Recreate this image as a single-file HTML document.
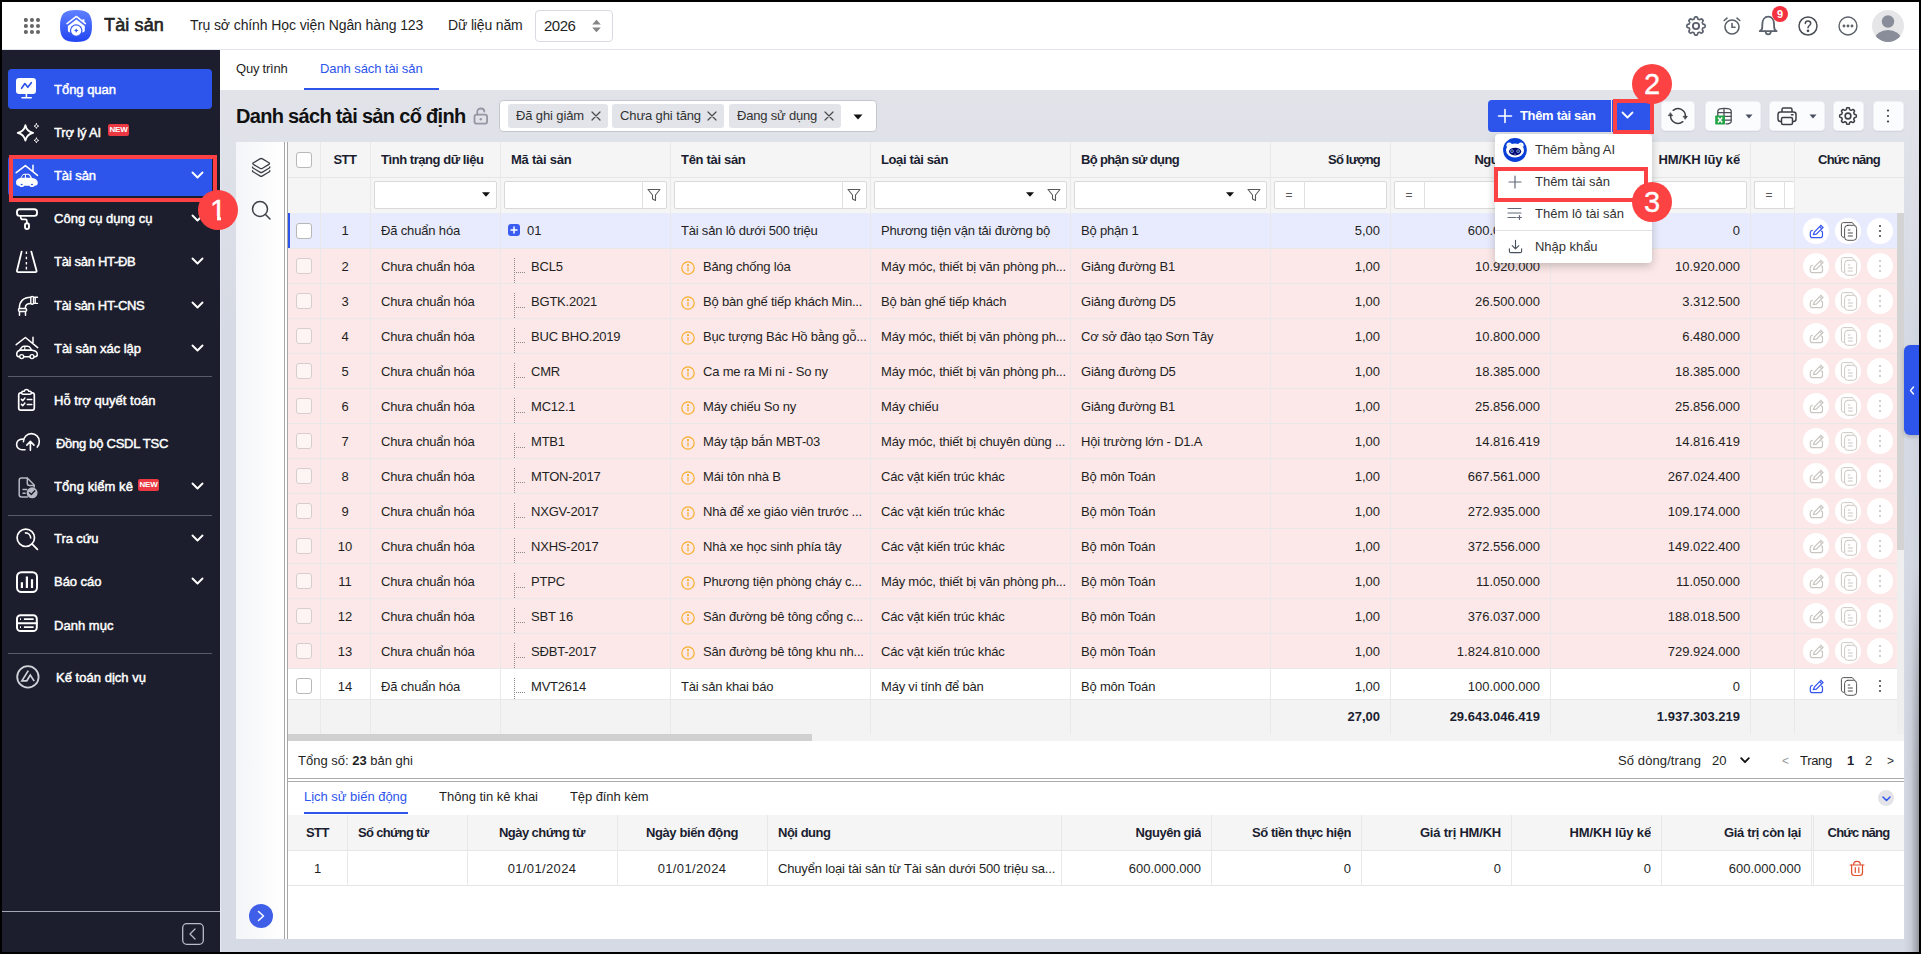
<!DOCTYPE html><html lang="vi"><head><meta charset="utf-8"><title>Tài sản</title><style>
*{box-sizing:border-box;margin:0;padding:0}
html,body{width:1921px;height:954px;overflow:hidden;background:#000}
body{font-family:"Liberation Sans",sans-serif;font-size:13px;color:#1f1f1f;position:relative;letter-spacing:-0.2px}
div,svg{position:absolute}
span{white-space:nowrap}
.c{display:flex;align-items:center;white-space:nowrap;overflow:hidden}
.r{justify-content:flex-end}
.m{justify-content:center}
.b{font-weight:700;letter-spacing:-0.45px;color:#1b1e30}
.n{letter-spacing:0}
.w{color:#fff}
.vl{width:1px;background:#e8e8e8}
.hl{height:1px;background:#e6e6e6}
.inp{background:#fff;border:1px solid #d9d9d9;border-radius:2px}
.btn{background:#fbfcfd;border:1px solid #eef0f5;border-radius:4px}
.circ{border-radius:50%;background:#fff}
.mi{font-weight:400;letter-spacing:0;color:#fff;font-size:13px;-webkit-text-stroke:.45px #fff}
.red{border:4px solid #fb4143}
.num{padding-top:1px;border-radius:50%;background:#fc4242;color:#fff;font-size:29px;-webkit-text-stroke:.35px #fff;display:flex;align-items:center;justify-content:center;letter-spacing:0}
</style></head><body>
<div style="left:2px;top:2px;width:1917px;height:950px;background:#e1e3ea"></div>
<div style="left:2px;top:2px;width:1917px;height:48px;background:#fff;border-bottom:1px solid #e3e5ec"></div>
<svg style="left:24px;top:18px" width="17" height="17" viewBox="0 0 17 17"><circle cx="1.90" cy="2.00" r="2.05" fill="#676767"/><circle cx="1.90" cy="8.00" r="2.05" fill="#676767"/><circle cx="1.90" cy="14.00" r="2.05" fill="#676767"/><circle cx="7.95" cy="2.00" r="2.05" fill="#676767"/><circle cx="7.95" cy="8.00" r="2.05" fill="#676767"/><circle cx="7.95" cy="14.00" r="2.05" fill="#676767"/><circle cx="14.00" cy="2.00" r="2.05" fill="#676767"/><circle cx="14.00" cy="8.00" r="2.05" fill="#676767"/><circle cx="14.00" cy="14.00" r="2.05" fill="#676767"/></svg>
<svg style="left:60px;top:10px" width="32" height="32" viewBox="0 0 32 32">
<defs><linearGradient id="lg" x1="0" y1="0" x2="0" y2="1"><stop offset="0" stop-color="#5f80ff"/><stop offset="1" stop-color="#2145f2"/></linearGradient></defs>
<path d="M16 0C27.500 0 32 3.500 32 16C32 28.500 27.500 32 16 32C4.500 32 0 28.500 0 16C0 3.500 4.500 0 16 0Z" fill="url(#lg)"/>
<path d="M7 13.600L16.400 6.400L25.400 13.600" fill="none" stroke="#fff" stroke-width="1.500" stroke-linecap="round" stroke-linejoin="round"/>
<path d="M22.500 9.200h1.900v3.200l-1.900-1.500z" fill="#fff"/>
<path d="M16.400 9.400L24.800 16V20.500C24.800 21.500 23.500 22.500 22 22.500H10.500C9 22.500 7.900 21.500 7.900 20.500V16Z" fill="#fff"/>
<circle cx="16.200" cy="20.600" r="6.300" fill="#3457f5"/>
<circle cx="16.200" cy="20.600" r="5.100" fill="#fff"/>
<path d="M16.200 18.400l.75 1.450 1.450.75-1.450.75-.75 1.450-.75-1.450-1.450-.75 1.450-.75z" fill="#3457f5"/>
</svg>
<div class="c" style="left:104px;top:9px;width:80px;height:32px;font-size:18px;font-weight:400;letter-spacing:0;color:#222;-webkit-text-stroke:.6px #222"><span id="t1" style="letter-spacing:0.14px">Tài sản</span></div>
<div class="c" style="left:190px;top:9px;width:250px;height:32px;font-size:14px"><span id="t2" style="letter-spacing:-0.1px">Trụ sở chính Học viện Ngân hàng 123</span></div>
<div class="c" style="left:448px;top:9px;width:90px;height:32px;font-size:14px"><span id="t3" style="letter-spacing:-0.16px">Dữ liệu năm</span></div>
<div style="left:535px;top:10px;width:78px;height:32px;background:#fff;border:1px solid #d9dbe2;border-radius:4px"></div>
<div class="c" style="left:544px;top:9px;width:40px;height:33px;font-size:15px;letter-spacing:0"><span id="t4" style="letter-spacing:-0.47px">2026</span></div>
<svg style="left:591px;top:19px" width="11" height="14" viewBox="0 0 11 14"><path d="M1.2 5.5L5.5 0.8L9.8 5.5Z M1.2 8.5L5.5 13.2L9.8 8.5Z" fill="#858585"/></svg>
<svg style="left:1684px;top:14px" width="24" height="24" viewBox="0 0 24 24" fill="none" stroke="#5b626e" stroke-width="1.700" stroke-linejoin="round"><path d="M12.00 2.90L12.36 2.91L12.71 2.96L13.06 3.08L13.36 3.40L13.58 4.06L13.75 4.71L13.96 5.05L14.20 5.22L14.46 5.33L14.72 5.44L14.97 5.55L15.24 5.65L15.53 5.70L15.92 5.61L16.50 5.27L17.12 4.96L17.56 4.95L17.89 5.10L18.17 5.32L18.43 5.57L18.68 5.83L18.90 6.11L19.05 6.44L19.04 6.88L18.73 7.50L18.39 8.08L18.30 8.47L18.35 8.76L18.45 9.03L18.56 9.28L18.67 9.54L18.78 9.80L18.95 10.04L19.29 10.25L19.94 10.42L20.60 10.64L20.92 10.94L21.04 11.29L21.09 11.64L21.10 12.00L21.09 12.36L21.04 12.71L20.92 13.06L20.60 13.36L19.94 13.58L19.29 13.75L18.95 13.96L18.78 14.20L18.67 14.46L18.56 14.72L18.45 14.97L18.35 15.24L18.30 15.53L18.39 15.92L18.73 16.50L19.04 17.12L19.05 17.56L18.90 17.89L18.68 18.17L18.43 18.43L18.17 18.68L17.89 18.90L17.56 19.05L17.12 19.04L16.50 18.73L15.92 18.39L15.53 18.30L15.24 18.35L14.97 18.45L14.72 18.56L14.46 18.67L14.20 18.78L13.96 18.95L13.75 19.29L13.58 19.94L13.36 20.60L13.06 20.92L12.71 21.04L12.36 21.09L12.00 21.10L11.64 21.09L11.29 21.04L10.94 20.92L10.64 20.60L10.42 19.94L10.25 19.29L10.04 18.95L9.80 18.78L9.54 18.67L9.28 18.56L9.03 18.45L8.76 18.35L8.47 18.30L8.08 18.39L7.50 18.73L6.88 19.04L6.44 19.05L6.11 18.90L5.83 18.68L5.57 18.43L5.32 18.17L5.10 17.89L4.95 17.56L4.96 17.12L5.27 16.50L5.61 15.92L5.70 15.53L5.65 15.24L5.55 14.97L5.44 14.72L5.33 14.46L5.22 14.20L5.05 13.96L4.71 13.75L4.06 13.58L3.40 13.36L3.08 13.06L2.96 12.71L2.91 12.36L2.90 12.00L2.91 11.64L2.96 11.29L3.08 10.94L3.40 10.64L4.06 10.42L4.71 10.25L5.05 10.04L5.22 9.80L5.33 9.54L5.44 9.28L5.55 9.03L5.65 8.76L5.70 8.47L5.61 8.08L5.27 7.50L4.96 6.88L4.95 6.44L5.10 6.11L5.32 5.83L5.57 5.57L5.83 5.32L6.11 5.10L6.44 4.95L6.88 4.96L7.50 5.27L8.08 5.61L8.47 5.70L8.76 5.65L9.03 5.55L9.28 5.44L9.54 5.33L9.80 5.22L10.04 5.05L10.25 4.71L10.42 4.06L10.64 3.40L10.94 3.08L11.29 2.96L11.64 2.91Z"/><circle cx="12" cy="12" r="3.100" stroke-width="1.900"/></svg>
<svg style="left:1720px;top:14px" width="24" height="24" viewBox="0 0 24 24" fill="none" stroke="#5c6069" stroke-width="1.6" stroke-linecap="round"><circle cx="12" cy="13" r="7"/><path d="M12 9.500V13.300H15"/><path d="M4.200 6.500L7 4.200M19.800 6.500L17 4.200"/></svg>
<svg style="left:1756px;top:14px" width="24" height="24" viewBox="0 0 24 24" fill="none" stroke="#5b626e" stroke-width="1.800" stroke-linecap="round" stroke-linejoin="round"><path d="M3.800 17.200C5.800 16.500 6.300 15 6.300 12.500V10.500C6.300 5.500 8.800 2.700 12.200 2.700C15.600 2.700 18.100 5.500 18.100 10.500V12.500C18.100 15 18.600 16.500 20.600 17.200Z"/><path d="M9.600 17.500C9.600 21.200 14.800 21.200 14.800 17.500"/></svg>
<div class="c" style="left:1772px;top:6px;width:16px;height:16px;border-radius:50%;background:#f4323f;color:#fff;font-size:11px;font-weight:700;letter-spacing:0;justify-content:center">9</div>
<svg style="left:1796px;top:14px" width="24" height="24" viewBox="0 0 24 24" fill="none" stroke="#4a4d55" stroke-width="1.5" stroke-linecap="round"><circle cx="12" cy="12" r="9"/><path d="M9.300 9.600C9.300 8 10.500 7 12 7C13.500 7 14.700 8 14.700 9.500C14.700 11.500 12 11.600 12 13.800"/><circle cx="12" cy="16.800" r=".6" fill="#4a4d55"/></svg>
<svg style="left:1836px;top:14px" width="24" height="24" viewBox="0 0 24 24" fill="none" stroke="#5c6069" stroke-width="1.4"><circle cx="12" cy="12" r="9"/><circle cx="8" cy="12" r=".7" fill="#5c6069"/><circle cx="12" cy="12" r=".7" fill="#5c6069"/><circle cx="16" cy="12" r=".7" fill="#5c6069"/></svg>
<svg style="left:1872px;top:10px" width="32" height="32" viewBox="0 0 32 32"><defs><clipPath id="av"><circle cx="16" cy="16" r="16"/></clipPath></defs><circle cx="16" cy="16" r="16" fill="#e6e6e8"/><g clip-path="url(#av)" fill="#898d99"><circle cx="16" cy="11.500" r="6.200"/><ellipse cx="16" cy="29.500" rx="13" ry="9.500"/></g></svg>
<div style="left:2px;top:50px;width:218px;height:902px;background:#1c1e2d"></div>
<div style="left:8px;top:69px;width:204px;height:40px;background:#2d55ec;border-radius:4px"></div>
<div style="left:8px;top:156px;width:204px;height:40px;background:#2d55ec;border-radius:4px"></div>
<div class="c mi" style="left:54px;top:69px;width:160px;height:40px;"><span id="t5" style="letter-spacing:-0.02px">Tổng quan</span></div>
<div class="c mi" style="left:54px;top:112px;width:160px;height:40px;"><span id="t6" style="letter-spacing:-0.17px">Trợ lý AI</span></div>
<div class="c mi" style="left:54px;top:155px;width:160px;height:40px;"><span id="t7" style="letter-spacing:-0.09px">Tài sản</span></div>
<svg style="left:191px;top:171px" width="13" height="9" viewBox="0 0 13 9" fill="none" stroke="#fff" stroke-width="1.900" stroke-linecap="round" stroke-linejoin="round"><path d="M1.500 1.500L6.500 6.500L11.500 1.500"/></svg>
<div class="c mi" style="left:54px;top:198px;width:160px;height:40px;"><span id="t8" style="letter-spacing:0.01px">Công cụ dụng cụ</span></div>
<svg style="left:191px;top:214px" width="13" height="9" viewBox="0 0 13 9" fill="none" stroke="#fff" stroke-width="1.900" stroke-linecap="round" stroke-linejoin="round"><path d="M1.500 1.500L6.500 6.500L11.500 1.500"/></svg>
<div class="c mi" style="left:54px;top:241px;width:160px;height:40px;"><span id="t9" style="letter-spacing:-0.29px">Tài sản HT-ĐB</span></div>
<svg style="left:191px;top:257px" width="13" height="9" viewBox="0 0 13 9" fill="none" stroke="#fff" stroke-width="1.900" stroke-linecap="round" stroke-linejoin="round"><path d="M1.500 1.500L6.500 6.500L11.500 1.500"/></svg>
<div class="c mi" style="left:54px;top:285px;width:160px;height:40px;"><span id="t10" style="letter-spacing:-0.3px">Tài sản HT-CNS</span></div>
<svg style="left:191px;top:301px" width="13" height="9" viewBox="0 0 13 9" fill="none" stroke="#fff" stroke-width="1.900" stroke-linecap="round" stroke-linejoin="round"><path d="M1.500 1.500L6.500 6.500L11.500 1.500"/></svg>
<div class="c mi" style="left:54px;top:328px;width:160px;height:40px;"><span id="t11" style="letter-spacing:-0.03px">Tài sản xác lập</span></div>
<svg style="left:191px;top:344px" width="13" height="9" viewBox="0 0 13 9" fill="none" stroke="#fff" stroke-width="1.900" stroke-linecap="round" stroke-linejoin="round"><path d="M1.500 1.500L6.500 6.500L11.500 1.500"/></svg>
<div class="c mi" style="left:54px;top:380px;width:160px;height:40px;"><span id="t12" style="letter-spacing:0.03px">Hỗ trợ quyết toán</span></div>
<div class="c mi" style="left:56px;top:423px;width:160px;height:40px;"><span id="t13" style="letter-spacing:-0.27px">Đồng bộ CSDL TSC</span></div>
<div class="c mi" style="left:54px;top:466px;width:160px;height:40px;"><span id="t14" style="letter-spacing:0.08px">Tổng kiểm kê</span></div>
<svg style="left:191px;top:482px" width="13" height="9" viewBox="0 0 13 9" fill="none" stroke="#fff" stroke-width="1.900" stroke-linecap="round" stroke-linejoin="round"><path d="M1.500 1.500L6.500 6.500L11.500 1.500"/></svg>
<div class="c mi" style="left:54px;top:518px;width:160px;height:40px;"><span id="t15" style="letter-spacing:-0.08px">Tra cứu</span></div>
<svg style="left:191px;top:534px" width="13" height="9" viewBox="0 0 13 9" fill="none" stroke="#fff" stroke-width="1.900" stroke-linecap="round" stroke-linejoin="round"><path d="M1.500 1.500L6.500 6.500L11.500 1.500"/></svg>
<div class="c mi" style="left:54px;top:561px;width:160px;height:40px;"><span id="t16" style="letter-spacing:-0.03px">Báo cáo</span></div>
<svg style="left:191px;top:577px" width="13" height="9" viewBox="0 0 13 9" fill="none" stroke="#fff" stroke-width="1.900" stroke-linecap="round" stroke-linejoin="round"><path d="M1.500 1.500L6.500 6.500L11.500 1.500"/></svg>
<div class="c mi" style="left:54px;top:605px;width:160px;height:40px;"><span id="t17" style="letter-spacing:0.03px">Danh mục</span></div>
<div class="c mi" style="left:56px;top:657px;width:160px;height:40px;"><span id="t18" style="letter-spacing:0.03px">Kế toán dịch vụ</span></div>
<div class="c" style="left:108px;top:124px;width:21px;height:12px;background:#ea3943;border-radius:2px;color:#fff;font-size:8px;font-weight:700;letter-spacing:-0.2px;justify-content:center;line-height:12px">NEW</div>
<div class="c" style="left:138px;top:479px;width:21px;height:12px;background:#ea3943;border-radius:2px;color:#fff;font-size:8px;font-weight:700;letter-spacing:-0.2px;justify-content:center;line-height:12px">NEW</div>
<div style="left:8px;top:376px;width:204px;height:1px;background:#565a6b"></div>
<div style="left:8px;top:515px;width:204px;height:1px;background:#565a6b"></div>
<div style="left:8px;top:653px;width:204px;height:1px;background:#565a6b"></div>
<div style="left:2px;top:911px;width:218px;height:1px;background:#a4a7b3"></div>
<svg style="left:182px;top:923px" width="22" height="22" viewBox="0 0 22 22" fill="none" stroke="#b9bcc8" stroke-width="1.300" stroke-linecap="round" stroke-linejoin="round"><rect x=".7" y=".7" width="20.600" height="20.600" rx="4"/><path d="M13 6L8 11L13 16"/></svg>
<svg style="left:14px;top:76px" width="28" height="28" viewBox="0 0 28 28" fill="none" stroke="#fff" stroke-width="1.7" stroke-linecap="round" stroke-linejoin="round"><rect x="2" y="2" width="20" height="16" rx="3.200" fill="#fff" stroke="none"/><path d="M12.400 18v3.400M8 21.800h9.200" stroke-width="1.600"/><path d="M7.600 12.300L10.900 7.600L13.800 11.300L17.300 6.700" stroke="#2d55ec" stroke-width="1.700"/></svg>
<svg style="left:14px;top:119px" width="28" height="28" viewBox="0 0 28 28" fill="none" stroke="#fff" stroke-width="1.7" stroke-linecap="round" stroke-linejoin="round"><path d="M11.4 6.2C12.4 10.7 14.600000000000001 12.9 19.1 13.9C14.600000000000001 14.9 12.4 17.1 11.4 21.6C10.4 17.1 8.2 14.9 3.7 13.9C8.2 12.9 10.4 10.7 11.4 6.2Z" stroke-width="1.800"/><path d="M22.4 4.8C22.799999999999997 6.199999999999999 23.299999999999997 6.699999999999999 24.7 7.1C23.299999999999997 7.5 22.799999999999997 8.0 22.4 9.399999999999999C22.0 8.0 21.5 7.5 20.099999999999998 7.1C21.5 6.699999999999999 22.0 6.199999999999999 22.4 4.8Z" stroke-width="1"/><path d="M22.4 19.099999999999998C22.799999999999997 20.5 23.299999999999997 21.0 24.7 21.4C23.299999999999997 21.799999999999997 22.799999999999997 22.299999999999997 22.4 23.7C22.0 22.299999999999997 21.5 21.799999999999997 20.099999999999998 21.4C21.5 21.0 22.0 20.5 22.4 19.099999999999998Z" stroke-width="1"/></svg>
<svg style="left:14px;top:163px" width="28" height="28" viewBox="0 0 28 28" fill="none" stroke="#fff" stroke-width="1.7" stroke-linecap="round" stroke-linejoin="round"><path d="M2.200 9.700L11.400 2.600L23.500 12.400M19 2.300V7.700" stroke-width="1.500"/><path d="M2 19.500C2 16.800 3.800 15.600 6.300 15.100L8.300 12.100C8.900 11.200 9.700 10.800 10.800 10.800H13.600C15 10.800 16 11.400 16.800 12.700L18.100 15C21.500 15.500 23.800 17 23.800 19.800C23.800 21.700 22.600 22.600 21 22.800H20.500C20.300 23.600 19.300 24.100 18 24.100C16.700 24.100 15.700 23.600 15.500 22.800H10.200C10 23.600 9 24.100 7.700 24.100C6.400 24.100 5.400 23.600 5.200 22.800H4.500C3 22.600 2 21.500 2 19.500Z" fill="#fff" stroke="none"/><path d="M7.300 14.700L9 12.300C9.300 11.900 9.700 11.700 10.200 11.700H10.900V14.700ZM12 11.700H13.700C14.400 11.700 15 12 15.400 12.700L16.500 14.700H12Z" fill="#2d55ec" stroke="none"/><ellipse cx="7.700" cy="21.500" rx="1.100" ry=".8" fill="#2d55ec" stroke="none"/><ellipse cx="18" cy="21.500" rx="1.100" ry=".8" fill="#2d55ec" stroke="none"/></svg>
<svg style="left:14px;top:206px" width="28" height="28" viewBox="0 0 28 28" fill="none" stroke="#fff" stroke-width="1.7" stroke-linecap="round" stroke-linejoin="round"><rect x="3" y="3.200" width="20" height="6.700" rx="2.600" stroke-width="1.900"/><path d="M6.700 10.900C6.700 12.500 7.500 13.400 9 13.400H11.300C12.400 13.400 12.900 14 12.900 15V16.500" stroke-width="1.700"/><rect x="11" y="17.300" width="4" height="5.800" rx="2" stroke-width="1.900"/></svg>
<svg style="left:14px;top:249px" width="28" height="28" viewBox="0 0 28 28" fill="none" stroke="#fff" stroke-width="1.7" stroke-linecap="round" stroke-linejoin="round"><path d="M7.600 2.600L3 21.500C2.800 22.600 3.300 23.200 4.300 23.200H21.300C22.300 23.200 22.800 22.600 22.500 21.500L17.300 2.600" stroke-width="1.800"/><path d="M12.400 2.600V5M12.400 7.800V10.300M12.400 12.900V15.400M12.400 17.700V20.400" stroke-width="1.400" stroke-linecap="butt"/></svg>
<svg style="left:14px;top:293px" width="28" height="28" viewBox="0 0 28 28" fill="none" stroke="#fff" stroke-width="1.7" stroke-linecap="round" stroke-linejoin="round"><path d="M5.400 15.500V14.500C5.400 8.500 9.500 4.200 16.800 4.200M11.400 15.500V14.500C11.400 12 13 10.400 16.800 10.400" stroke-width="1.500"/><rect x="16.800" y="3.400" width="2.700" height="7.900" rx="1.300" stroke-width="1.400"/><path d="M19.500 4.200H23.500M19.500 10.400H23.500M21.200 4.200V10.400" stroke-width="1.400"/><rect x="4.400" y="15.500" width="8.300" height="3" rx="1.400" stroke-width="1.400"/><path d="M5.500 18.500V22.300M11.500 18.500V22.300" stroke-width="1.500"/></svg>
<svg style="left:14px;top:336px" width="28" height="28" viewBox="0 0 28 28" fill="none" stroke="#fff" stroke-width="1.7" stroke-linecap="round" stroke-linejoin="round"><path d="M2.200 8.700L11.400 1.500L23.700 11.600M19 1.200V6.700" stroke-width="1.500"/><path d="M5.500 14.200L7.800 11.200C8.400 10.500 9.200 10.200 10.200 10.200H13.300C14.600 10.200 15.600 10.800 16.300 11.900L17.600 14.200" stroke-width="1.400"/><path d="M10.800 10.400V14M7 14.200H18" stroke-width="1.200"/><path d="M5.300 20.800H4.800C3.500 20.600 2.700 19.700 2.700 18.200C2.700 15.900 4 14.700 6.300 14.300H18C21 14.600 23.300 16 23.300 18.500C23.300 20 22.500 20.700 21.200 20.800H20.400M10.200 20.800H15.500" stroke-width="1.500"/><circle cx="7.700" cy="20.600" r="2" stroke-width="1.400"/><circle cx="18" cy="20.600" r="2" stroke-width="1.400"/></svg>
<svg style="left:14px;top:387px" width="28" height="28" viewBox="0 0 28 28" fill="none" stroke="#fff" stroke-width="1.7" stroke-linecap="round" stroke-linejoin="round"><path d="M7.500 5.800H6.800C5.500 5.800 4.700 6.600 4.700 7.900V21.100C4.700 22.400 5.500 23.200 6.800 23.200H18.200C19.500 23.200 20.300 22.400 20.300 21.100V7.900C20.300 6.600 19.500 5.800 18.200 5.800H17.500" stroke-width="1.700"/><path d="M7.700 5.500C7.700 4.700 8.200 4.200 9 4.200H10.200C10.500 3.100 11.300 2.500 12.500 2.500C13.700 2.500 14.500 3.100 14.800 4.200H16C16.800 4.200 17.300 4.700 17.300 5.500V6C17.300 6.800 16.800 7.300 16 7.300H9C8.200 7.300 7.700 6.800 7.700 6Z" stroke-width="1.500"/><path d="M7.400 12.400L8.700 13.700L10.900 11M7.400 17.400L8.700 18.700L10.900 16M13.300 12.500H17.800M13.300 17.500H17.800" stroke-width="1.500"/></svg>
<svg style="left:14px;top:430px" width="28" height="28" viewBox="0 0 28 28" fill="none" stroke="#fff" stroke-width="1.7" stroke-linecap="round" stroke-linejoin="round"><path d="M11 19.800H8.200C5 19.800 2.600 17.500 2.600 14.500C2.600 11.500 5 9.100 8.300 9.100C8.800 9.100 9.200 9.100 9.600 9.200" stroke-width="1.600"/><path d="M9.400 11.800C9.400 7.100 13 3.600 17.300 3.600C21.800 3.600 25.300 7.100 25.300 11.500C25.300 13.800 24.500 15.700 23.300 17.100" stroke-width="1.600"/><path d="M16.400 20.200V11.700M12.800 15.100L16.400 11.400L20 15.100" stroke-width="1.600"/></svg>
<svg style="left:14px;top:474px" width="28" height="28" viewBox="0 0 28 28" fill="none" stroke="#b7b9c4" stroke-width="1.7" stroke-linecap="round" stroke-linejoin="round"><path d="M13.500 22.900H7.400C6 22.900 5.200 22.100 5.200 20.700V6.200C5.200 4.800 6 4 7.400 4H13.300L20.200 11V13" stroke-width="1.500"/><path d="M13.300 4.300V9.300C13.300 10.700 14 11.400 15.400 11.400H20" stroke-width="1.500"/><path d="M9 15.500H12.800M9 19.300H11.200" stroke-width="1.400"/><circle cx="18.100" cy="18.800" r="5.500" fill="#b7b9c4" stroke="none"/><path d="M15.500 18.800L17.300 20.500L20.800 16.800" stroke="#1c1e2d" stroke-width="1.400"/></svg>
<svg style="left:14px;top:525px" width="28" height="28" viewBox="0 0 28 28" fill="none" stroke="#fff" stroke-width="1.7" stroke-linecap="round" stroke-linejoin="round"><circle cx="11.800" cy="12.800" r="8.700" stroke-width="1.700"/><path d="M11.500 7.900C14.300 7.900 16.600 10.100 16.700 13" stroke-width="1.600"/><path d="M18.200 19.200L23.400 24.300" stroke-width="1.800"/></svg>
<svg style="left:14px;top:568px" width="28" height="28" viewBox="0 0 28 28" fill="none" stroke="#fff" stroke-width="1.7" stroke-linecap="round" stroke-linejoin="round"><rect x="3" y="4.200" width="20" height="19.800" rx="4.500" stroke-width="2"/><path d="M7.900 14.300V20M12.900 8.400V20M18 11.300V20" stroke-width="2.200" stroke-linecap="butt"/></svg>
<svg style="left:14px;top:611px" width="28" height="28" viewBox="0 0 28 28" fill="none" stroke="#fff" stroke-width="1.7" stroke-linecap="round" stroke-linejoin="round"><rect x="3" y="4.200" width="19.800" height="15.800" rx="3.600" stroke-width="2"/><path d="M3 12.200H22.800" stroke-width="1.900"/><path d="M6 8.100H7M9.900 8.100H19.600M6 16.100H7M9.900 16.100H19.600" stroke-width="1.600" stroke-linecap="butt"/></svg>
<svg style="left:16px;top:665px" width="24" height="24" viewBox="0 0 24 24" fill="none" stroke="#cfd1d9" stroke-width="1.800" stroke-linejoin="miter"><circle cx="11.900" cy="11.900" r="10.700"/><path d="M12.300 5.600L5.900 15.800H10.800L14.300 10L18.200 16.100" stroke-width="1.700"/></svg>
<div style="left:220px;top:50px;width:1699px;height:40px;background:#fff"></div>
<div class="c" style="left:236px;top:49px;width:70px;height:38px;font-size:13px"><span id="t19" style="letter-spacing:-0.22px">Quy trình</span></div>
<div class="c" style="left:320px;top:49px;width:120px;height:38px;font-size:13px;color:#2d55ec"><span id="t20" style="letter-spacing:-0.09px">Danh sách tài sản</span></div>
<div style="left:304px;top:88px;width:135px;height:2px;background:#2d55ec"></div>
<div style="left:220px;top:90px;width:1699px;height:862px;background:linear-gradient(180deg,#e1e3e9 0,#e0e2e9 50px,#d6dae4 240px,#d6dae4 100%)"></div>
<div style="left:220px;top:90px;width:1px;height:862px;background:#e6e8f2"></div>
<div style="left:1904px;top:90px;width:15px;height:862px;background:linear-gradient(90deg,rgba(120,124,135,0) 0,rgba(120,124,135,.14) 7px,rgba(105,107,115,.6) 15px);-webkit-mask-image:linear-gradient(180deg,transparent 0,rgba(0,0,0,.08) 30%,rgba(0,0,0,.12) 55%,rgba(0,0,0,.7) 68%,#000 80%);mask-image:linear-gradient(180deg,transparent 0,rgba(0,0,0,.08) 30%,rgba(0,0,0,.12) 55%,rgba(0,0,0,.7) 68%,#000 80%)"></div>
<div class="c" style="left:236px;top:98px;width:240px;height:36px;font-size:20px;font-weight:700;color:#111;letter-spacing:-0.5px"><span id="t21" style="letter-spacing:-0.69px">Danh sách tài sản cố định</span></div>
<svg style="left:473px;top:106px" width="16" height="20" viewBox="0 0 16 20" fill="none" stroke="#9497a3" stroke-width="1.800" stroke-linecap="round"><rect x="1.500" y="8.700" width="12.600" height="9" rx="2.200"/><path d="M4.300 8.500V5.800C4.300 3.700 5.800 2.500 7.800 2.500C9.800 2.500 11.300 3.700 11.300 5.600"/><circle cx="7.800" cy="13.200" r="1.200" fill="#9497a3" stroke="none"/></svg>
<div style="left:499px;top:100px;width:378px;height:32px;background:#fff;border:1px solid #c3c6ce;border-radius:4px"></div>
<div style="left:508px;top:104px;width:100px;height:24px;background:#e2e4ea;border-radius:3px"></div>
<div class="c" style="left:516px;top:103px;width:100px;height:24px;color:#333"><span id="t22" style="letter-spacing:-0.12px">Đã ghi giảm</span></div>
<svg style="left:591px;top:111px" width="10" height="10" viewBox="0 0 10 10" stroke="#4a4a4a" stroke-width="1.200" stroke-linecap="round"><path d="M1 1L9 9M9 1L1 9"/></svg>
<div style="left:612px;top:104px;width:112px;height:24px;background:#e2e4ea;border-radius:3px"></div>
<div class="c" style="left:620px;top:103px;width:112px;height:24px;color:#333"><span id="t23" style="letter-spacing:-0.11px">Chưa ghi tăng</span></div>
<svg style="left:707px;top:111px" width="10" height="10" viewBox="0 0 10 10" stroke="#4a4a4a" stroke-width="1.200" stroke-linecap="round"><path d="M1 1L9 9M9 1L1 9"/></svg>
<div style="left:729px;top:104px;width:112px;height:24px;background:#e2e4ea;border-radius:3px"></div>
<div class="c" style="left:737px;top:103px;width:112px;height:24px;color:#333"><span id="t24" style="letter-spacing:-0.2px">Đang sử dụng</span></div>
<svg style="left:824px;top:111px" width="10" height="10" viewBox="0 0 10 10" stroke="#4a4a4a" stroke-width="1.200" stroke-linecap="round"><path d="M1 1L9 9M9 1L1 9"/></svg>
<svg style="left:853px;top:114px" width="10" height="6" viewBox="0 0 10 6"><path d="M.500 .500h9L5 5.500z" fill="#111"/></svg>
<div style="left:1488px;top:100px;width:123px;height:32px;background:#2d55ec;border-radius:4px 0 0 4px"></div>
<svg style="left:1497px;top:108px" width="16" height="16" viewBox="0 0 16 16" stroke="#fff" stroke-width="1.600" stroke-linecap="round"><path d="M8 1.500v13M1.500 8h13"/></svg>
<div class="c" style="left:1520px;top:99px;width:90px;height:32px;color:#fff;font-weight:700;letter-spacing:-0.45px"><span id="t25" style="letter-spacing:-0.33px">Thêm tài sản</span></div>
<div style="left:1612px;top:100px;width:40px;height:32px;background:#2d55ec;border-radius:0 4px 4px 0"></div>
<svg style="left:1621px;top:111px" width="13" height="9" viewBox="0 0 13 9" fill="none" stroke="#fff" stroke-width="1.800" stroke-linecap="round" stroke-linejoin="round"><path d="M1.500 1.500L6.500 6.500L11.500 1.500"/></svg>
<div class="btn" style="left:1661px;top:101px;width:34px;height:30px;box-shadow:0 1px 1px rgba(60,70,100,.08)"></div>
<div class="btn" style="left:1705px;top:101px;width:56px;height:30px;box-shadow:0 1px 1px rgba(60,70,100,.08)"></div>
<div class="btn" style="left:1769px;top:101px;width:56px;height:30px;box-shadow:0 1px 1px rgba(60,70,100,.08)"></div>
<div class="btn" style="left:1833px;top:101px;width:31px;height:30px;box-shadow:0 1px 1px rgba(60,70,100,.08)"></div>
<div class="btn" style="left:1873px;top:101px;width:31px;height:30px;box-shadow:0 1px 1px rgba(60,70,100,.08)"></div>
<svg style="left:1667px;top:105px" width="22" height="22" viewBox="0 0 22 22" fill="none" stroke="#3c3f46" stroke-width="1.500" stroke-linecap="round" stroke-linejoin="round"><path d="M6.200 5.300A7.500 7.500 0 0 1 18.400 11.500"/><path d="M15.800 16.700A7.500 7.500 0 0 1 3.600 10.500"/><path d="M16.400 11.300h4l-2 2.800z" fill="#3c3f46" stroke-width=".7"/><path d="M1.600 10.700h4l-2-2.800z" fill="#3c3f46" stroke-width=".7"/></svg>
<svg style="left:1713px;top:106px" width="22" height="22" viewBox="0 0 22 22" fill="none" stroke="#4a4d55" stroke-width="1.300"><path d="M4.800 10V5C4.800 3.200 7 2.300 11.500 2.300S18.200 3.200 18.200 5V15.200C18.200 17 16 17.900 12.500 17.900"/><path d="M4.800 6.600h13.400M10 10.400h8.200M10 14.200h8.200M11 2.400V10"/><rect x="2.200" y="9.600" width="9.800" height="8.800" rx=".6" fill="#22a447" stroke="none"/><path d="M5 11.600l4.200 4.800M9.200 11.600l-4.200 4.800" stroke="#fff" stroke-width="1.500"/></svg>
<svg style="left:1745px;top:114px" width="8" height="5" viewBox="0 0 9 6"><path d="M.3 .5h8.400L4.500 5.500z" fill="#4a4f60"/></svg>
<svg style="left:1776px;top:105px" width="22" height="22" viewBox="0 0 22 22" fill="none" stroke="#3c3f46" stroke-width="1.500" stroke-linejoin="round"><path d="M6 7V4.500C6 3.500 6.800 3 7.500 3h7c.8 0 1.500.5 1.500 1.500V7"/><path d="M5.500 16.500H4.500C3 16.500 2 15.500 2 14V9.500C2 8 3 7 4.500 7h13C19 7 20 8 20 9.500V14c0 1.500-1 2.500-2.500 2.500h-1"/><rect x="5.500" y="12.500" width="11" height="7" rx="1.500"/><path d="M15.500 9.800h1.500" stroke-linecap="round"/></svg>
<svg style="left:1809px;top:114px" width="8" height="5" viewBox="0 0 9 6"><path d="M.3 .5h8.400L4.500 5.500z" fill="#4a4f60"/></svg>
<svg style="left:1837px;top:105px" width="22" height="22" viewBox="0 0 24 24" fill="none" stroke="#3c3f46" stroke-width="1.700" stroke-linejoin="round"><path d="M12.00 2.90L12.36 2.91L12.71 2.96L13.06 3.08L13.36 3.40L13.58 4.06L13.75 4.71L13.96 5.05L14.20 5.22L14.46 5.33L14.72 5.44L14.97 5.55L15.24 5.65L15.53 5.70L15.92 5.61L16.50 5.27L17.12 4.96L17.56 4.95L17.89 5.10L18.17 5.32L18.43 5.57L18.68 5.83L18.90 6.11L19.05 6.44L19.04 6.88L18.73 7.50L18.39 8.08L18.30 8.47L18.35 8.76L18.45 9.03L18.56 9.28L18.67 9.54L18.78 9.80L18.95 10.04L19.29 10.25L19.94 10.42L20.60 10.64L20.92 10.94L21.04 11.29L21.09 11.64L21.10 12.00L21.09 12.36L21.04 12.71L20.92 13.06L20.60 13.36L19.94 13.58L19.29 13.75L18.95 13.96L18.78 14.20L18.67 14.46L18.56 14.72L18.45 14.97L18.35 15.24L18.30 15.53L18.39 15.92L18.73 16.50L19.04 17.12L19.05 17.56L18.90 17.89L18.68 18.17L18.43 18.43L18.17 18.68L17.89 18.90L17.56 19.05L17.12 19.04L16.50 18.73L15.92 18.39L15.53 18.30L15.24 18.35L14.97 18.45L14.72 18.56L14.46 18.67L14.20 18.78L13.96 18.95L13.75 19.29L13.58 19.94L13.36 20.60L13.06 20.92L12.71 21.04L12.36 21.09L12.00 21.10L11.64 21.09L11.29 21.04L10.94 20.92L10.64 20.60L10.42 19.94L10.25 19.29L10.04 18.95L9.80 18.78L9.54 18.67L9.28 18.56L9.03 18.45L8.76 18.35L8.47 18.30L8.08 18.39L7.50 18.73L6.88 19.04L6.44 19.05L6.11 18.90L5.83 18.68L5.57 18.43L5.32 18.17L5.10 17.89L4.95 17.56L4.96 17.12L5.27 16.50L5.61 15.92L5.70 15.53L5.65 15.24L5.55 14.97L5.44 14.72L5.33 14.46L5.22 14.20L5.05 13.96L4.71 13.75L4.06 13.58L3.40 13.36L3.08 13.06L2.96 12.71L2.91 12.36L2.90 12.00L2.91 11.64L2.96 11.29L3.08 10.94L3.40 10.64L4.06 10.42L4.71 10.25L5.05 10.04L5.22 9.80L5.33 9.54L5.44 9.28L5.55 9.03L5.65 8.76L5.70 8.47L5.61 8.08L5.27 7.50L4.96 6.88L4.95 6.44L5.10 6.11L5.32 5.83L5.57 5.57L5.83 5.32L6.11 5.10L6.44 4.95L6.88 4.96L7.50 5.27L8.08 5.61L8.47 5.70L8.76 5.65L9.03 5.55L9.28 5.44L9.54 5.33L9.80 5.22L10.04 5.05L10.25 4.71L10.42 4.06L10.64 3.40L10.94 3.08L11.29 2.96L11.64 2.91Z"/><circle cx="12" cy="12" r="3.100" stroke-width="1.800"/></svg>
<svg style="left:1886px;top:108px" width="4" height="16" viewBox="0 0 4 16" fill="#3c3f46"><circle cx="2" cy="2.500" r="1.100"/><circle cx="2" cy="8" r="1.100"/><circle cx="2" cy="13.500" r="1.100"/></svg>
<div style="left:236px;top:142px;width:1668px;height:797px;background:#fff"></div>
<div style="left:236px;top:142px;width:48px;height:797px;background:linear-gradient(90deg,#f4f5f8,#fff)"></div>
<div style="left:284px;top:142px;width:1px;height:797px;background:#a6a6a6"></div>
<div style="left:287px;top:142px;width:1px;height:797px;background:#a6a6a6"></div>
<svg style="left:250px;top:157px" width="22" height="22" viewBox="0 0 22 22" fill="none" stroke="#3c3f46" stroke-width="1.250" stroke-linejoin="round" stroke-linecap="round"><path d="M9.900 1.900Q11.200 1.100 12.500 1.900L18.900 5.800Q20.200 6.600 18.900 7.400L12.500 11.300Q11.200 12.100 9.900 11.300L3.400 7.400Q2.100 6.600 3.400 5.800Z"/><path d="M2.600 10Q2.200 10.600 3.400 11.300L9.900 15.100Q11.200 15.900 12.500 15.100L18.900 11.300Q20.200 10.600 19.700 10"/><path d="M2.600 13.700Q2.200 14.300 3.400 15L9.900 18.900Q11.200 19.700 12.500 18.900L18.900 15Q20.200 14.300 19.700 13.700"/></svg>
<svg style="left:250px;top:199px" width="22" height="22" viewBox="0 0 22 22" fill="none" stroke="#3c3f46" stroke-width="1.500" stroke-linecap="round"><circle cx="10" cy="10" r="7.500"/><path d="M15.500 15.500L20 20"/></svg>
<div style="left:249px;top:904px;width:24px;height:24px;border-radius:50%;background:#3f5fe9"></div>
<svg style="left:257px;top:910px" width="8" height="12" viewBox="0 0 8 12" fill="none" stroke="#fff" stroke-width="1.500" stroke-linecap="round" stroke-linejoin="round"><path d="M1.500 1.500L6.500 6L1.500 10.500"/></svg>
<div style="left:288px;top:142px;width:1616px;height:71px;background:#f5f5f5"></div>
<div style="left:288px;top:213px;width:1609px;height:35px;background:#e8ebfd"></div>
<div style="left:296px;top:223px;width:16px;height:16px;background:#fff;border:1px solid #b8b8b8;border-radius:3px"></div>
<div class="c m" style="left:320px;top:213px;width:50px;height:35px;letter-spacing:0">1</div>
<div class="c" style="left:381px;top:213px;width:118px;height:35px;"><span id="t26" style="letter-spacing:-0.16px">Đã chuẩn hóa</span></div>
<div style="left:508px;top:224px;width:12px;height:12px;background:#3a5cf0;border-radius:3px"></div>
<svg style="left:510px;top:226px" width="8" height="8" viewBox="0 0 8 8" stroke="#fff" stroke-width="1.500" stroke-linecap="round"><path d="M4 1v6M1 4h6"/></svg>
<div class="c" style="left:527px;top:213px;width:140px;height:35px;letter-spacing:0">01</div>
<div class="c" style="left:681px;top:213px;width:188px;height:35px;">Tài sản lô dưới 500 triệu</div>
<div class="c" style="left:881px;top:213px;width:189px;height:35px;">Phương tiện vận tải đường bộ</div>
<div class="c" style="left:1081px;top:213px;width:188px;height:35px;">Bộ phận 1</div>
<div class="c r n" style="left:1270px;top:213px;width:110px;height:35px;">5,00</div>
<div class="c r n" style="left:1390px;top:213px;width:150px;height:35px;">600.000.000</div>
<div class="c r n" style="left:1550px;top:213px;width:190px;height:35px;">0</div>
<div class="circ" style="left:1803px;top:218px;width:26px;height:26px;"></div>
<div class="circ" style="left:1835px;top:218px;width:26px;height:26px;"></div>
<div class="circ" style="left:1867px;top:218px;width:26px;height:26px;"></div>
<svg style="left:1807px;top:222px" width="18" height="18" viewBox="0 0 18 18" fill="none" stroke="#3556ee" stroke-width="1.200" stroke-linecap="round" stroke-linejoin="round"><path d="M5.300 8.400C3.900 8.600 3.300 9.400 3.300 10.800V13.400C3.300 14.800 4.200 15.600 5.500 15.600H13.300C14.600 15.600 15.500 14.800 15.500 13.400V10.800C15.500 9.900 15.200 9.400 14.600 9.100"/><path d="M6.400 12.600L7.300 10.100L13.900 3.400L16 5.500L9.300 12.100ZM12.600 4.700L14.700 6.800" stroke-linejoin="miter"/></svg>
<svg style="left:1839px;top:220px" width="20" height="22" viewBox="0 0 20 22" fill="none" stroke="#4a4a4a" stroke-width=".950" stroke-linecap="round" stroke-linejoin="round"><path d="M5 17.400C3.500 17.400 2.400 16.400 2.400 15V4.800C2.400 3.400 3.200 2.600 4.600 2.600H13.300L15.300 4.900"/><rect x="5.600" y="5.300" width="12" height="15" rx="3.200" fill="#fff"/><path d="M8.800 10H11.300M8.800 13H13.800M8.800 16H13.800" stroke-width="1.500" stroke-linecap="butt" opacity=".65"/></svg>
<svg style="left:1878px;top:224px" width="4" height="14" viewBox="0 0 4 14" fill="#4a4a4a"><circle cx="2" cy="2" r="1.100"/><circle cx="2" cy="7" r="1.100"/><circle cx="2" cy="12" r="1.100"/></svg>
<div style="left:288px;top:248px;width:1609px;height:35px;background:#fce8e8"></div>
<div style="left:288px;top:248px;width:1609px;height:1px;background:#e8e8e8"></div>
<div style="left:296px;top:258px;width:16px;height:16px;background:#fff;border:1px solid #b8b8b8;border-radius:3px;opacity:.55"></div>
<div class="c m" style="left:320px;top:248px;width:50px;height:36px;letter-spacing:0">2</div>
<div class="c" style="left:381px;top:248px;width:118px;height:36px;"><span id="t27" style="letter-spacing:-0.24px">Chưa chuẩn hóa</span></div>
<div style="left:514px;top:258px;width:1px;height:25px;background:repeating-linear-gradient(180deg,#8a8a8a 0,#8a8a8a 1px,transparent 1px,transparent 2px)"></div>
<div style="left:514px;top:272px;width:11px;height:1px;background:repeating-linear-gradient(90deg,#8a8a8a 0,#8a8a8a 1px,transparent 1px,transparent 2px)"></div>
<div class="c" style="left:531px;top:248px;width:138px;height:36px;">BCL5</div>
<svg style="left:681px;top:261px" width="14" height="14" viewBox="0 0 14 14" fill="none" stroke="#f6ae2d" stroke-width="1.200" stroke-linecap="round"><circle cx="7" cy="7" r="6.200"/><path d="M7 6.500v3.500"/><circle cx="7" cy="4.200" r=".5" fill="#f6ae2d"/></svg>
<div class="c" style="left:703px;top:248px;width:166px;height:36px;">Bảng chống lóa</div>
<div class="c" style="left:881px;top:248px;width:189px;height:36px;">Máy móc, thiết bị văn phòng ph...</div>
<div class="c" style="left:1081px;top:248px;width:188px;height:36px;">Giảng đường B1</div>
<div class="c r n" style="left:1270px;top:248px;width:110px;height:36px;">1,00</div>
<div class="c r n" style="left:1390px;top:248px;width:150px;height:36px;">10.920.000</div>
<div class="c r n" style="left:1550px;top:248px;width:190px;height:36px;">10.920.000</div>
<div class="circ" style="left:1803px;top:253px;width:26px;height:26px;"></div>
<div class="circ" style="left:1835px;top:253px;width:26px;height:26px;"></div>
<div class="circ" style="left:1867px;top:253px;width:26px;height:26px;"></div>
<svg style="left:1807px;top:257px" width="18" height="18" viewBox="0 0 18 18" fill="none" stroke="#c9c5c0" stroke-width="1.200" stroke-linecap="round" stroke-linejoin="round"><path d="M5.300 8.400C3.900 8.600 3.300 9.400 3.300 10.800V13.400C3.300 14.800 4.200 15.600 5.500 15.600H13.300C14.600 15.600 15.500 14.800 15.500 13.400V10.800C15.500 9.900 15.200 9.400 14.600 9.100"/><path d="M6.400 12.600L7.300 10.100L13.900 3.400L16 5.500L9.300 12.100ZM12.600 4.700L14.700 6.800" stroke-linejoin="miter"/></svg>
<svg style="left:1839px;top:255px" width="20" height="22" viewBox="0 0 20 22" fill="none" stroke="#c9c5c0" stroke-width=".950" stroke-linecap="round" stroke-linejoin="round"><path d="M5 17.400C3.500 17.400 2.400 16.400 2.400 15V4.800C2.400 3.400 3.200 2.600 4.600 2.600H13.300L15.300 4.900"/><rect x="5.600" y="5.300" width="12" height="15" rx="3.200" fill="#fff"/><path d="M8.800 10H11.300M8.800 13H13.800M8.800 16H13.800" stroke-width="1.500" stroke-linecap="butt" opacity=".65"/></svg>
<svg style="left:1878px;top:259px" width="4" height="14" viewBox="0 0 4 14" fill="#c9c5c0"><circle cx="2" cy="2" r="1.100"/><circle cx="2" cy="7" r="1.100"/><circle cx="2" cy="12" r="1.100"/></svg>
<div style="left:288px;top:283px;width:1609px;height:35px;background:#fce8e8"></div>
<div style="left:288px;top:283px;width:1609px;height:1px;background:#e8e8e8"></div>
<div style="left:296px;top:293px;width:16px;height:16px;background:#fff;border:1px solid #b8b8b8;border-radius:3px;opacity:.55"></div>
<div class="c m" style="left:320px;top:283px;width:50px;height:36px;letter-spacing:0">3</div>
<div class="c" style="left:381px;top:283px;width:118px;height:36px;"><span id="t28" style="letter-spacing:-0.24px">Chưa chuẩn hóa</span></div>
<div style="left:514px;top:293px;width:1px;height:25px;background:repeating-linear-gradient(180deg,#8a8a8a 0,#8a8a8a 1px,transparent 1px,transparent 2px)"></div>
<div style="left:514px;top:307px;width:11px;height:1px;background:repeating-linear-gradient(90deg,#8a8a8a 0,#8a8a8a 1px,transparent 1px,transparent 2px)"></div>
<div class="c" style="left:531px;top:283px;width:138px;height:36px;">BGTK.2021</div>
<svg style="left:681px;top:296px" width="14" height="14" viewBox="0 0 14 14" fill="none" stroke="#f6ae2d" stroke-width="1.200" stroke-linecap="round"><circle cx="7" cy="7" r="6.200"/><path d="M7 6.500v3.500"/><circle cx="7" cy="4.200" r=".5" fill="#f6ae2d"/></svg>
<div class="c" style="left:703px;top:283px;width:166px;height:36px;">Bộ bàn ghế tiếp khách Min...</div>
<div class="c" style="left:881px;top:283px;width:189px;height:36px;">Bộ bàn ghế tiếp khách</div>
<div class="c" style="left:1081px;top:283px;width:188px;height:36px;">Giảng đường D5</div>
<div class="c r n" style="left:1270px;top:283px;width:110px;height:36px;">1,00</div>
<div class="c r n" style="left:1390px;top:283px;width:150px;height:36px;">26.500.000</div>
<div class="c r n" style="left:1550px;top:283px;width:190px;height:36px;">3.312.500</div>
<div class="circ" style="left:1803px;top:288px;width:26px;height:26px;"></div>
<div class="circ" style="left:1835px;top:288px;width:26px;height:26px;"></div>
<div class="circ" style="left:1867px;top:288px;width:26px;height:26px;"></div>
<svg style="left:1807px;top:292px" width="18" height="18" viewBox="0 0 18 18" fill="none" stroke="#c9c5c0" stroke-width="1.200" stroke-linecap="round" stroke-linejoin="round"><path d="M5.300 8.400C3.900 8.600 3.300 9.400 3.300 10.800V13.400C3.300 14.800 4.200 15.600 5.500 15.600H13.300C14.600 15.600 15.500 14.800 15.500 13.400V10.800C15.500 9.900 15.200 9.400 14.600 9.100"/><path d="M6.400 12.600L7.300 10.100L13.900 3.400L16 5.500L9.300 12.100ZM12.600 4.700L14.700 6.800" stroke-linejoin="miter"/></svg>
<svg style="left:1839px;top:290px" width="20" height="22" viewBox="0 0 20 22" fill="none" stroke="#c9c5c0" stroke-width=".950" stroke-linecap="round" stroke-linejoin="round"><path d="M5 17.400C3.500 17.400 2.400 16.400 2.400 15V4.800C2.400 3.400 3.200 2.600 4.600 2.600H13.300L15.300 4.900"/><rect x="5.600" y="5.300" width="12" height="15" rx="3.200" fill="#fff"/><path d="M8.800 10H11.300M8.800 13H13.800M8.800 16H13.800" stroke-width="1.500" stroke-linecap="butt" opacity=".65"/></svg>
<svg style="left:1878px;top:294px" width="4" height="14" viewBox="0 0 4 14" fill="#c9c5c0"><circle cx="2" cy="2" r="1.100"/><circle cx="2" cy="7" r="1.100"/><circle cx="2" cy="12" r="1.100"/></svg>
<div style="left:288px;top:318px;width:1609px;height:35px;background:#fce8e8"></div>
<div style="left:288px;top:318px;width:1609px;height:1px;background:#e8e8e8"></div>
<div style="left:296px;top:328px;width:16px;height:16px;background:#fff;border:1px solid #b8b8b8;border-radius:3px;opacity:.55"></div>
<div class="c m" style="left:320px;top:318px;width:50px;height:36px;letter-spacing:0">4</div>
<div class="c" style="left:381px;top:318px;width:118px;height:36px;"><span id="t29" style="letter-spacing:-0.24px">Chưa chuẩn hóa</span></div>
<div style="left:514px;top:328px;width:1px;height:25px;background:repeating-linear-gradient(180deg,#8a8a8a 0,#8a8a8a 1px,transparent 1px,transparent 2px)"></div>
<div style="left:514px;top:342px;width:11px;height:1px;background:repeating-linear-gradient(90deg,#8a8a8a 0,#8a8a8a 1px,transparent 1px,transparent 2px)"></div>
<div class="c" style="left:531px;top:318px;width:138px;height:36px;">BUC BHO.2019</div>
<svg style="left:681px;top:331px" width="14" height="14" viewBox="0 0 14 14" fill="none" stroke="#f6ae2d" stroke-width="1.200" stroke-linecap="round"><circle cx="7" cy="7" r="6.200"/><path d="M7 6.500v3.500"/><circle cx="7" cy="4.200" r=".5" fill="#f6ae2d"/></svg>
<div class="c" style="left:703px;top:318px;width:166px;height:36px;">Bục tượng Bác Hồ bằng gỗ...</div>
<div class="c" style="left:881px;top:318px;width:189px;height:36px;">Máy móc, thiết bị văn phòng ph...</div>
<div class="c" style="left:1081px;top:318px;width:188px;height:36px;">Cơ sở đào tạo Sơn Tây</div>
<div class="c r n" style="left:1270px;top:318px;width:110px;height:36px;">1,00</div>
<div class="c r n" style="left:1390px;top:318px;width:150px;height:36px;">10.800.000</div>
<div class="c r n" style="left:1550px;top:318px;width:190px;height:36px;">6.480.000</div>
<div class="circ" style="left:1803px;top:323px;width:26px;height:26px;"></div>
<div class="circ" style="left:1835px;top:323px;width:26px;height:26px;"></div>
<div class="circ" style="left:1867px;top:323px;width:26px;height:26px;"></div>
<svg style="left:1807px;top:327px" width="18" height="18" viewBox="0 0 18 18" fill="none" stroke="#c9c5c0" stroke-width="1.200" stroke-linecap="round" stroke-linejoin="round"><path d="M5.300 8.400C3.900 8.600 3.300 9.400 3.300 10.800V13.400C3.300 14.800 4.200 15.600 5.500 15.600H13.300C14.600 15.600 15.500 14.800 15.500 13.400V10.800C15.500 9.900 15.200 9.400 14.600 9.100"/><path d="M6.400 12.600L7.300 10.100L13.900 3.400L16 5.500L9.300 12.100ZM12.600 4.700L14.700 6.800" stroke-linejoin="miter"/></svg>
<svg style="left:1839px;top:325px" width="20" height="22" viewBox="0 0 20 22" fill="none" stroke="#c9c5c0" stroke-width=".950" stroke-linecap="round" stroke-linejoin="round"><path d="M5 17.400C3.500 17.400 2.400 16.400 2.400 15V4.800C2.400 3.400 3.200 2.600 4.600 2.600H13.300L15.300 4.900"/><rect x="5.600" y="5.300" width="12" height="15" rx="3.200" fill="#fff"/><path d="M8.800 10H11.300M8.800 13H13.800M8.800 16H13.800" stroke-width="1.500" stroke-linecap="butt" opacity=".65"/></svg>
<svg style="left:1878px;top:329px" width="4" height="14" viewBox="0 0 4 14" fill="#c9c5c0"><circle cx="2" cy="2" r="1.100"/><circle cx="2" cy="7" r="1.100"/><circle cx="2" cy="12" r="1.100"/></svg>
<div style="left:288px;top:353px;width:1609px;height:35px;background:#fce8e8"></div>
<div style="left:288px;top:353px;width:1609px;height:1px;background:#e8e8e8"></div>
<div style="left:296px;top:363px;width:16px;height:16px;background:#fff;border:1px solid #b8b8b8;border-radius:3px;opacity:.55"></div>
<div class="c m" style="left:320px;top:353px;width:50px;height:36px;letter-spacing:0">5</div>
<div class="c" style="left:381px;top:353px;width:118px;height:36px;"><span id="t30" style="letter-spacing:-0.24px">Chưa chuẩn hóa</span></div>
<div style="left:514px;top:363px;width:1px;height:25px;background:repeating-linear-gradient(180deg,#8a8a8a 0,#8a8a8a 1px,transparent 1px,transparent 2px)"></div>
<div style="left:514px;top:377px;width:11px;height:1px;background:repeating-linear-gradient(90deg,#8a8a8a 0,#8a8a8a 1px,transparent 1px,transparent 2px)"></div>
<div class="c" style="left:531px;top:353px;width:138px;height:36px;">CMR</div>
<svg style="left:681px;top:366px" width="14" height="14" viewBox="0 0 14 14" fill="none" stroke="#f6ae2d" stroke-width="1.200" stroke-linecap="round"><circle cx="7" cy="7" r="6.200"/><path d="M7 6.500v3.500"/><circle cx="7" cy="4.200" r=".5" fill="#f6ae2d"/></svg>
<div class="c" style="left:703px;top:353px;width:166px;height:36px;">Ca me ra Mi ni - So ny</div>
<div class="c" style="left:881px;top:353px;width:189px;height:36px;">Máy móc, thiết bị văn phòng ph...</div>
<div class="c" style="left:1081px;top:353px;width:188px;height:36px;">Giảng đường D5</div>
<div class="c r n" style="left:1270px;top:353px;width:110px;height:36px;">1,00</div>
<div class="c r n" style="left:1390px;top:353px;width:150px;height:36px;">18.385.000</div>
<div class="c r n" style="left:1550px;top:353px;width:190px;height:36px;">18.385.000</div>
<div class="circ" style="left:1803px;top:358px;width:26px;height:26px;"></div>
<div class="circ" style="left:1835px;top:358px;width:26px;height:26px;"></div>
<div class="circ" style="left:1867px;top:358px;width:26px;height:26px;"></div>
<svg style="left:1807px;top:362px" width="18" height="18" viewBox="0 0 18 18" fill="none" stroke="#c9c5c0" stroke-width="1.200" stroke-linecap="round" stroke-linejoin="round"><path d="M5.300 8.400C3.900 8.600 3.300 9.400 3.300 10.800V13.400C3.300 14.800 4.200 15.600 5.500 15.600H13.300C14.600 15.600 15.500 14.800 15.500 13.400V10.800C15.500 9.900 15.200 9.400 14.600 9.100"/><path d="M6.400 12.600L7.300 10.100L13.900 3.400L16 5.500L9.300 12.100ZM12.600 4.700L14.700 6.800" stroke-linejoin="miter"/></svg>
<svg style="left:1839px;top:360px" width="20" height="22" viewBox="0 0 20 22" fill="none" stroke="#c9c5c0" stroke-width=".950" stroke-linecap="round" stroke-linejoin="round"><path d="M5 17.400C3.500 17.400 2.400 16.400 2.400 15V4.800C2.400 3.400 3.200 2.600 4.600 2.600H13.300L15.300 4.900"/><rect x="5.600" y="5.300" width="12" height="15" rx="3.200" fill="#fff"/><path d="M8.800 10H11.300M8.800 13H13.800M8.800 16H13.800" stroke-width="1.500" stroke-linecap="butt" opacity=".65"/></svg>
<svg style="left:1878px;top:364px" width="4" height="14" viewBox="0 0 4 14" fill="#c9c5c0"><circle cx="2" cy="2" r="1.100"/><circle cx="2" cy="7" r="1.100"/><circle cx="2" cy="12" r="1.100"/></svg>
<div style="left:288px;top:388px;width:1609px;height:35px;background:#fce8e8"></div>
<div style="left:288px;top:388px;width:1609px;height:1px;background:#e8e8e8"></div>
<div style="left:296px;top:398px;width:16px;height:16px;background:#fff;border:1px solid #b8b8b8;border-radius:3px;opacity:.55"></div>
<div class="c m" style="left:320px;top:388px;width:50px;height:36px;letter-spacing:0">6</div>
<div class="c" style="left:381px;top:388px;width:118px;height:36px;"><span id="t31" style="letter-spacing:-0.24px">Chưa chuẩn hóa</span></div>
<div style="left:514px;top:398px;width:1px;height:25px;background:repeating-linear-gradient(180deg,#8a8a8a 0,#8a8a8a 1px,transparent 1px,transparent 2px)"></div>
<div style="left:514px;top:412px;width:11px;height:1px;background:repeating-linear-gradient(90deg,#8a8a8a 0,#8a8a8a 1px,transparent 1px,transparent 2px)"></div>
<div class="c" style="left:531px;top:388px;width:138px;height:36px;">MC12.1</div>
<svg style="left:681px;top:401px" width="14" height="14" viewBox="0 0 14 14" fill="none" stroke="#f6ae2d" stroke-width="1.200" stroke-linecap="round"><circle cx="7" cy="7" r="6.200"/><path d="M7 6.500v3.500"/><circle cx="7" cy="4.200" r=".5" fill="#f6ae2d"/></svg>
<div class="c" style="left:703px;top:388px;width:166px;height:36px;">Máy chiếu So ny</div>
<div class="c" style="left:881px;top:388px;width:189px;height:36px;">Máy chiếu</div>
<div class="c" style="left:1081px;top:388px;width:188px;height:36px;">Giảng đường B1</div>
<div class="c r n" style="left:1270px;top:388px;width:110px;height:36px;">1,00</div>
<div class="c r n" style="left:1390px;top:388px;width:150px;height:36px;">25.856.000</div>
<div class="c r n" style="left:1550px;top:388px;width:190px;height:36px;">25.856.000</div>
<div class="circ" style="left:1803px;top:393px;width:26px;height:26px;"></div>
<div class="circ" style="left:1835px;top:393px;width:26px;height:26px;"></div>
<div class="circ" style="left:1867px;top:393px;width:26px;height:26px;"></div>
<svg style="left:1807px;top:397px" width="18" height="18" viewBox="0 0 18 18" fill="none" stroke="#c9c5c0" stroke-width="1.200" stroke-linecap="round" stroke-linejoin="round"><path d="M5.300 8.400C3.900 8.600 3.300 9.400 3.300 10.800V13.400C3.300 14.800 4.200 15.600 5.500 15.600H13.300C14.600 15.600 15.500 14.800 15.500 13.400V10.800C15.500 9.900 15.200 9.400 14.600 9.100"/><path d="M6.400 12.600L7.300 10.100L13.900 3.400L16 5.500L9.300 12.100ZM12.600 4.700L14.700 6.800" stroke-linejoin="miter"/></svg>
<svg style="left:1839px;top:395px" width="20" height="22" viewBox="0 0 20 22" fill="none" stroke="#c9c5c0" stroke-width=".950" stroke-linecap="round" stroke-linejoin="round"><path d="M5 17.400C3.500 17.400 2.400 16.400 2.400 15V4.800C2.400 3.400 3.200 2.600 4.600 2.600H13.300L15.300 4.900"/><rect x="5.600" y="5.300" width="12" height="15" rx="3.200" fill="#fff"/><path d="M8.800 10H11.300M8.800 13H13.800M8.800 16H13.800" stroke-width="1.500" stroke-linecap="butt" opacity=".65"/></svg>
<svg style="left:1878px;top:399px" width="4" height="14" viewBox="0 0 4 14" fill="#c9c5c0"><circle cx="2" cy="2" r="1.100"/><circle cx="2" cy="7" r="1.100"/><circle cx="2" cy="12" r="1.100"/></svg>
<div style="left:288px;top:423px;width:1609px;height:35px;background:#fce8e8"></div>
<div style="left:288px;top:423px;width:1609px;height:1px;background:#e8e8e8"></div>
<div style="left:296px;top:433px;width:16px;height:16px;background:#fff;border:1px solid #b8b8b8;border-radius:3px;opacity:.55"></div>
<div class="c m" style="left:320px;top:423px;width:50px;height:36px;letter-spacing:0">7</div>
<div class="c" style="left:381px;top:423px;width:118px;height:36px;"><span id="t32" style="letter-spacing:-0.24px">Chưa chuẩn hóa</span></div>
<div style="left:514px;top:433px;width:1px;height:25px;background:repeating-linear-gradient(180deg,#8a8a8a 0,#8a8a8a 1px,transparent 1px,transparent 2px)"></div>
<div style="left:514px;top:447px;width:11px;height:1px;background:repeating-linear-gradient(90deg,#8a8a8a 0,#8a8a8a 1px,transparent 1px,transparent 2px)"></div>
<div class="c" style="left:531px;top:423px;width:138px;height:36px;">MTB1</div>
<svg style="left:681px;top:436px" width="14" height="14" viewBox="0 0 14 14" fill="none" stroke="#f6ae2d" stroke-width="1.200" stroke-linecap="round"><circle cx="7" cy="7" r="6.200"/><path d="M7 6.500v3.500"/><circle cx="7" cy="4.200" r=".5" fill="#f6ae2d"/></svg>
<div class="c" style="left:703px;top:423px;width:166px;height:36px;">Máy tập bắn MBT-03</div>
<div class="c" style="left:881px;top:423px;width:189px;height:36px;">Máy móc, thiết bị chuyên dùng ...</div>
<div class="c" style="left:1081px;top:423px;width:188px;height:36px;">Hội trường lớn - D1.A</div>
<div class="c r n" style="left:1270px;top:423px;width:110px;height:36px;">1,00</div>
<div class="c r n" style="left:1390px;top:423px;width:150px;height:36px;">14.816.419</div>
<div class="c r n" style="left:1550px;top:423px;width:190px;height:36px;">14.816.419</div>
<div class="circ" style="left:1803px;top:428px;width:26px;height:26px;"></div>
<div class="circ" style="left:1835px;top:428px;width:26px;height:26px;"></div>
<div class="circ" style="left:1867px;top:428px;width:26px;height:26px;"></div>
<svg style="left:1807px;top:432px" width="18" height="18" viewBox="0 0 18 18" fill="none" stroke="#c9c5c0" stroke-width="1.200" stroke-linecap="round" stroke-linejoin="round"><path d="M5.300 8.400C3.900 8.600 3.300 9.400 3.300 10.800V13.400C3.300 14.800 4.200 15.600 5.500 15.600H13.300C14.600 15.600 15.500 14.800 15.500 13.400V10.800C15.500 9.900 15.200 9.400 14.600 9.100"/><path d="M6.400 12.600L7.300 10.100L13.900 3.400L16 5.500L9.300 12.100ZM12.600 4.700L14.700 6.800" stroke-linejoin="miter"/></svg>
<svg style="left:1839px;top:430px" width="20" height="22" viewBox="0 0 20 22" fill="none" stroke="#c9c5c0" stroke-width=".950" stroke-linecap="round" stroke-linejoin="round"><path d="M5 17.400C3.500 17.400 2.400 16.400 2.400 15V4.800C2.400 3.400 3.200 2.600 4.600 2.600H13.300L15.300 4.900"/><rect x="5.600" y="5.300" width="12" height="15" rx="3.200" fill="#fff"/><path d="M8.800 10H11.300M8.800 13H13.800M8.800 16H13.800" stroke-width="1.500" stroke-linecap="butt" opacity=".65"/></svg>
<svg style="left:1878px;top:434px" width="4" height="14" viewBox="0 0 4 14" fill="#c9c5c0"><circle cx="2" cy="2" r="1.100"/><circle cx="2" cy="7" r="1.100"/><circle cx="2" cy="12" r="1.100"/></svg>
<div style="left:288px;top:458px;width:1609px;height:35px;background:#fce8e8"></div>
<div style="left:288px;top:458px;width:1609px;height:1px;background:#e8e8e8"></div>
<div style="left:296px;top:468px;width:16px;height:16px;background:#fff;border:1px solid #b8b8b8;border-radius:3px;opacity:.55"></div>
<div class="c m" style="left:320px;top:458px;width:50px;height:36px;letter-spacing:0">8</div>
<div class="c" style="left:381px;top:458px;width:118px;height:36px;"><span id="t33" style="letter-spacing:-0.24px">Chưa chuẩn hóa</span></div>
<div style="left:514px;top:468px;width:1px;height:25px;background:repeating-linear-gradient(180deg,#8a8a8a 0,#8a8a8a 1px,transparent 1px,transparent 2px)"></div>
<div style="left:514px;top:482px;width:11px;height:1px;background:repeating-linear-gradient(90deg,#8a8a8a 0,#8a8a8a 1px,transparent 1px,transparent 2px)"></div>
<div class="c" style="left:531px;top:458px;width:138px;height:36px;">MTON-2017</div>
<svg style="left:681px;top:471px" width="14" height="14" viewBox="0 0 14 14" fill="none" stroke="#f6ae2d" stroke-width="1.200" stroke-linecap="round"><circle cx="7" cy="7" r="6.200"/><path d="M7 6.500v3.500"/><circle cx="7" cy="4.200" r=".5" fill="#f6ae2d"/></svg>
<div class="c" style="left:703px;top:458px;width:166px;height:36px;">Mái tôn nhà B</div>
<div class="c" style="left:881px;top:458px;width:189px;height:36px;">Các vật kiến trúc khác</div>
<div class="c" style="left:1081px;top:458px;width:188px;height:36px;">Bộ môn Toán</div>
<div class="c r n" style="left:1270px;top:458px;width:110px;height:36px;">1,00</div>
<div class="c r n" style="left:1390px;top:458px;width:150px;height:36px;">667.561.000</div>
<div class="c r n" style="left:1550px;top:458px;width:190px;height:36px;">267.024.400</div>
<div class="circ" style="left:1803px;top:463px;width:26px;height:26px;"></div>
<div class="circ" style="left:1835px;top:463px;width:26px;height:26px;"></div>
<div class="circ" style="left:1867px;top:463px;width:26px;height:26px;"></div>
<svg style="left:1807px;top:467px" width="18" height="18" viewBox="0 0 18 18" fill="none" stroke="#c9c5c0" stroke-width="1.200" stroke-linecap="round" stroke-linejoin="round"><path d="M5.300 8.400C3.900 8.600 3.300 9.400 3.300 10.800V13.400C3.300 14.800 4.200 15.600 5.500 15.600H13.300C14.600 15.600 15.500 14.800 15.500 13.400V10.800C15.500 9.900 15.200 9.400 14.600 9.100"/><path d="M6.400 12.600L7.300 10.100L13.900 3.400L16 5.500L9.300 12.100ZM12.600 4.700L14.700 6.800" stroke-linejoin="miter"/></svg>
<svg style="left:1839px;top:465px" width="20" height="22" viewBox="0 0 20 22" fill="none" stroke="#c9c5c0" stroke-width=".950" stroke-linecap="round" stroke-linejoin="round"><path d="M5 17.400C3.500 17.400 2.400 16.400 2.400 15V4.800C2.400 3.400 3.200 2.600 4.600 2.600H13.300L15.300 4.900"/><rect x="5.600" y="5.300" width="12" height="15" rx="3.200" fill="#fff"/><path d="M8.800 10H11.300M8.800 13H13.800M8.800 16H13.800" stroke-width="1.500" stroke-linecap="butt" opacity=".65"/></svg>
<svg style="left:1878px;top:469px" width="4" height="14" viewBox="0 0 4 14" fill="#c9c5c0"><circle cx="2" cy="2" r="1.100"/><circle cx="2" cy="7" r="1.100"/><circle cx="2" cy="12" r="1.100"/></svg>
<div style="left:288px;top:493px;width:1609px;height:35px;background:#fce8e8"></div>
<div style="left:288px;top:493px;width:1609px;height:1px;background:#e8e8e8"></div>
<div style="left:296px;top:503px;width:16px;height:16px;background:#fff;border:1px solid #b8b8b8;border-radius:3px;opacity:.55"></div>
<div class="c m" style="left:320px;top:493px;width:50px;height:36px;letter-spacing:0">9</div>
<div class="c" style="left:381px;top:493px;width:118px;height:36px;"><span id="t34" style="letter-spacing:-0.24px">Chưa chuẩn hóa</span></div>
<div style="left:514px;top:503px;width:1px;height:25px;background:repeating-linear-gradient(180deg,#8a8a8a 0,#8a8a8a 1px,transparent 1px,transparent 2px)"></div>
<div style="left:514px;top:517px;width:11px;height:1px;background:repeating-linear-gradient(90deg,#8a8a8a 0,#8a8a8a 1px,transparent 1px,transparent 2px)"></div>
<div class="c" style="left:531px;top:493px;width:138px;height:36px;">NXGV-2017</div>
<svg style="left:681px;top:506px" width="14" height="14" viewBox="0 0 14 14" fill="none" stroke="#f6ae2d" stroke-width="1.200" stroke-linecap="round"><circle cx="7" cy="7" r="6.200"/><path d="M7 6.500v3.500"/><circle cx="7" cy="4.200" r=".5" fill="#f6ae2d"/></svg>
<div class="c" style="left:703px;top:493px;width:166px;height:36px;">Nhà để xe giáo viên trước ...</div>
<div class="c" style="left:881px;top:493px;width:189px;height:36px;">Các vật kiến trúc khác</div>
<div class="c" style="left:1081px;top:493px;width:188px;height:36px;">Bộ môn Toán</div>
<div class="c r n" style="left:1270px;top:493px;width:110px;height:36px;">1,00</div>
<div class="c r n" style="left:1390px;top:493px;width:150px;height:36px;">272.935.000</div>
<div class="c r n" style="left:1550px;top:493px;width:190px;height:36px;">109.174.000</div>
<div class="circ" style="left:1803px;top:498px;width:26px;height:26px;"></div>
<div class="circ" style="left:1835px;top:498px;width:26px;height:26px;"></div>
<div class="circ" style="left:1867px;top:498px;width:26px;height:26px;"></div>
<svg style="left:1807px;top:502px" width="18" height="18" viewBox="0 0 18 18" fill="none" stroke="#c9c5c0" stroke-width="1.200" stroke-linecap="round" stroke-linejoin="round"><path d="M5.300 8.400C3.900 8.600 3.300 9.400 3.300 10.800V13.400C3.300 14.800 4.200 15.600 5.500 15.600H13.300C14.600 15.600 15.500 14.800 15.500 13.400V10.800C15.500 9.900 15.200 9.400 14.600 9.100"/><path d="M6.400 12.600L7.300 10.100L13.900 3.400L16 5.500L9.300 12.100ZM12.600 4.700L14.700 6.800" stroke-linejoin="miter"/></svg>
<svg style="left:1839px;top:500px" width="20" height="22" viewBox="0 0 20 22" fill="none" stroke="#c9c5c0" stroke-width=".950" stroke-linecap="round" stroke-linejoin="round"><path d="M5 17.400C3.500 17.400 2.400 16.400 2.400 15V4.800C2.400 3.400 3.200 2.600 4.600 2.600H13.300L15.300 4.900"/><rect x="5.600" y="5.300" width="12" height="15" rx="3.200" fill="#fff"/><path d="M8.800 10H11.300M8.800 13H13.800M8.800 16H13.800" stroke-width="1.500" stroke-linecap="butt" opacity=".65"/></svg>
<svg style="left:1878px;top:504px" width="4" height="14" viewBox="0 0 4 14" fill="#c9c5c0"><circle cx="2" cy="2" r="1.100"/><circle cx="2" cy="7" r="1.100"/><circle cx="2" cy="12" r="1.100"/></svg>
<div style="left:288px;top:528px;width:1609px;height:35px;background:#fce8e8"></div>
<div style="left:288px;top:528px;width:1609px;height:1px;background:#e8e8e8"></div>
<div style="left:296px;top:538px;width:16px;height:16px;background:#fff;border:1px solid #b8b8b8;border-radius:3px;opacity:.55"></div>
<div class="c m" style="left:320px;top:528px;width:50px;height:36px;letter-spacing:0">10</div>
<div class="c" style="left:381px;top:528px;width:118px;height:36px;"><span id="t35" style="letter-spacing:-0.24px">Chưa chuẩn hóa</span></div>
<div style="left:514px;top:538px;width:1px;height:25px;background:repeating-linear-gradient(180deg,#8a8a8a 0,#8a8a8a 1px,transparent 1px,transparent 2px)"></div>
<div style="left:514px;top:552px;width:11px;height:1px;background:repeating-linear-gradient(90deg,#8a8a8a 0,#8a8a8a 1px,transparent 1px,transparent 2px)"></div>
<div class="c" style="left:531px;top:528px;width:138px;height:36px;">NXHS-2017</div>
<svg style="left:681px;top:541px" width="14" height="14" viewBox="0 0 14 14" fill="none" stroke="#f6ae2d" stroke-width="1.200" stroke-linecap="round"><circle cx="7" cy="7" r="6.200"/><path d="M7 6.500v3.500"/><circle cx="7" cy="4.200" r=".5" fill="#f6ae2d"/></svg>
<div class="c" style="left:703px;top:528px;width:166px;height:36px;">Nhà xe học sinh phía tây</div>
<div class="c" style="left:881px;top:528px;width:189px;height:36px;">Các vật kiến trúc khác</div>
<div class="c" style="left:1081px;top:528px;width:188px;height:36px;">Bộ môn Toán</div>
<div class="c r n" style="left:1270px;top:528px;width:110px;height:36px;">1,00</div>
<div class="c r n" style="left:1390px;top:528px;width:150px;height:36px;">372.556.000</div>
<div class="c r n" style="left:1550px;top:528px;width:190px;height:36px;">149.022.400</div>
<div class="circ" style="left:1803px;top:533px;width:26px;height:26px;"></div>
<div class="circ" style="left:1835px;top:533px;width:26px;height:26px;"></div>
<div class="circ" style="left:1867px;top:533px;width:26px;height:26px;"></div>
<svg style="left:1807px;top:537px" width="18" height="18" viewBox="0 0 18 18" fill="none" stroke="#c9c5c0" stroke-width="1.200" stroke-linecap="round" stroke-linejoin="round"><path d="M5.300 8.400C3.900 8.600 3.300 9.400 3.300 10.800V13.400C3.300 14.800 4.200 15.600 5.500 15.600H13.300C14.600 15.600 15.500 14.800 15.500 13.400V10.800C15.500 9.900 15.200 9.400 14.600 9.100"/><path d="M6.400 12.600L7.300 10.100L13.900 3.400L16 5.500L9.300 12.100ZM12.600 4.700L14.700 6.800" stroke-linejoin="miter"/></svg>
<svg style="left:1839px;top:535px" width="20" height="22" viewBox="0 0 20 22" fill="none" stroke="#c9c5c0" stroke-width=".950" stroke-linecap="round" stroke-linejoin="round"><path d="M5 17.400C3.500 17.400 2.400 16.400 2.400 15V4.800C2.400 3.400 3.200 2.600 4.600 2.600H13.300L15.300 4.900"/><rect x="5.600" y="5.300" width="12" height="15" rx="3.200" fill="#fff"/><path d="M8.800 10H11.300M8.800 13H13.800M8.800 16H13.800" stroke-width="1.500" stroke-linecap="butt" opacity=".65"/></svg>
<svg style="left:1878px;top:539px" width="4" height="14" viewBox="0 0 4 14" fill="#c9c5c0"><circle cx="2" cy="2" r="1.100"/><circle cx="2" cy="7" r="1.100"/><circle cx="2" cy="12" r="1.100"/></svg>
<div style="left:288px;top:563px;width:1609px;height:35px;background:#fce8e8"></div>
<div style="left:288px;top:563px;width:1609px;height:1px;background:#e8e8e8"></div>
<div style="left:296px;top:573px;width:16px;height:16px;background:#fff;border:1px solid #b8b8b8;border-radius:3px;opacity:.55"></div>
<div class="c m" style="left:320px;top:563px;width:50px;height:36px;letter-spacing:0">11</div>
<div class="c" style="left:381px;top:563px;width:118px;height:36px;"><span id="t36" style="letter-spacing:-0.24px">Chưa chuẩn hóa</span></div>
<div style="left:514px;top:573px;width:1px;height:25px;background:repeating-linear-gradient(180deg,#8a8a8a 0,#8a8a8a 1px,transparent 1px,transparent 2px)"></div>
<div style="left:514px;top:587px;width:11px;height:1px;background:repeating-linear-gradient(90deg,#8a8a8a 0,#8a8a8a 1px,transparent 1px,transparent 2px)"></div>
<div class="c" style="left:531px;top:563px;width:138px;height:36px;">PTPC</div>
<svg style="left:681px;top:576px" width="14" height="14" viewBox="0 0 14 14" fill="none" stroke="#f6ae2d" stroke-width="1.200" stroke-linecap="round"><circle cx="7" cy="7" r="6.200"/><path d="M7 6.500v3.500"/><circle cx="7" cy="4.200" r=".5" fill="#f6ae2d"/></svg>
<div class="c" style="left:703px;top:563px;width:166px;height:36px;">Phương tiện phòng cháy c...</div>
<div class="c" style="left:881px;top:563px;width:189px;height:36px;">Máy móc, thiết bị văn phòng ph...</div>
<div class="c" style="left:1081px;top:563px;width:188px;height:36px;">Bộ môn Toán</div>
<div class="c r n" style="left:1270px;top:563px;width:110px;height:36px;">1,00</div>
<div class="c r n" style="left:1390px;top:563px;width:150px;height:36px;">11.050.000</div>
<div class="c r n" style="left:1550px;top:563px;width:190px;height:36px;">11.050.000</div>
<div class="circ" style="left:1803px;top:568px;width:26px;height:26px;"></div>
<div class="circ" style="left:1835px;top:568px;width:26px;height:26px;"></div>
<div class="circ" style="left:1867px;top:568px;width:26px;height:26px;"></div>
<svg style="left:1807px;top:572px" width="18" height="18" viewBox="0 0 18 18" fill="none" stroke="#c9c5c0" stroke-width="1.200" stroke-linecap="round" stroke-linejoin="round"><path d="M5.300 8.400C3.900 8.600 3.300 9.400 3.300 10.800V13.400C3.300 14.800 4.200 15.600 5.500 15.600H13.300C14.600 15.600 15.500 14.800 15.500 13.400V10.800C15.500 9.900 15.200 9.400 14.600 9.100"/><path d="M6.400 12.600L7.300 10.100L13.900 3.400L16 5.500L9.300 12.100ZM12.600 4.700L14.700 6.800" stroke-linejoin="miter"/></svg>
<svg style="left:1839px;top:570px" width="20" height="22" viewBox="0 0 20 22" fill="none" stroke="#c9c5c0" stroke-width=".950" stroke-linecap="round" stroke-linejoin="round"><path d="M5 17.400C3.500 17.400 2.400 16.400 2.400 15V4.800C2.400 3.400 3.200 2.600 4.600 2.600H13.300L15.300 4.900"/><rect x="5.600" y="5.300" width="12" height="15" rx="3.200" fill="#fff"/><path d="M8.800 10H11.300M8.800 13H13.800M8.800 16H13.800" stroke-width="1.500" stroke-linecap="butt" opacity=".65"/></svg>
<svg style="left:1878px;top:574px" width="4" height="14" viewBox="0 0 4 14" fill="#c9c5c0"><circle cx="2" cy="2" r="1.100"/><circle cx="2" cy="7" r="1.100"/><circle cx="2" cy="12" r="1.100"/></svg>
<div style="left:288px;top:598px;width:1609px;height:35px;background:#fce8e8"></div>
<div style="left:288px;top:598px;width:1609px;height:1px;background:#e8e8e8"></div>
<div style="left:296px;top:608px;width:16px;height:16px;background:#fff;border:1px solid #b8b8b8;border-radius:3px;opacity:.55"></div>
<div class="c m" style="left:320px;top:598px;width:50px;height:36px;letter-spacing:0">12</div>
<div class="c" style="left:381px;top:598px;width:118px;height:36px;"><span id="t37" style="letter-spacing:-0.24px">Chưa chuẩn hóa</span></div>
<div style="left:514px;top:608px;width:1px;height:25px;background:repeating-linear-gradient(180deg,#8a8a8a 0,#8a8a8a 1px,transparent 1px,transparent 2px)"></div>
<div style="left:514px;top:622px;width:11px;height:1px;background:repeating-linear-gradient(90deg,#8a8a8a 0,#8a8a8a 1px,transparent 1px,transparent 2px)"></div>
<div class="c" style="left:531px;top:598px;width:138px;height:36px;">SBT 16</div>
<svg style="left:681px;top:611px" width="14" height="14" viewBox="0 0 14 14" fill="none" stroke="#f6ae2d" stroke-width="1.200" stroke-linecap="round"><circle cx="7" cy="7" r="6.200"/><path d="M7 6.500v3.500"/><circle cx="7" cy="4.200" r=".5" fill="#f6ae2d"/></svg>
<div class="c" style="left:703px;top:598px;width:166px;height:36px;">Sân đường bê tông cổng c...</div>
<div class="c" style="left:881px;top:598px;width:189px;height:36px;">Các vật kiến trúc khác</div>
<div class="c" style="left:1081px;top:598px;width:188px;height:36px;">Bộ môn Toán</div>
<div class="c r n" style="left:1270px;top:598px;width:110px;height:36px;">1,00</div>
<div class="c r n" style="left:1390px;top:598px;width:150px;height:36px;">376.037.000</div>
<div class="c r n" style="left:1550px;top:598px;width:190px;height:36px;">188.018.500</div>
<div class="circ" style="left:1803px;top:603px;width:26px;height:26px;"></div>
<div class="circ" style="left:1835px;top:603px;width:26px;height:26px;"></div>
<div class="circ" style="left:1867px;top:603px;width:26px;height:26px;"></div>
<svg style="left:1807px;top:607px" width="18" height="18" viewBox="0 0 18 18" fill="none" stroke="#c9c5c0" stroke-width="1.200" stroke-linecap="round" stroke-linejoin="round"><path d="M5.300 8.400C3.900 8.600 3.300 9.400 3.300 10.800V13.400C3.300 14.800 4.200 15.600 5.500 15.600H13.300C14.600 15.600 15.500 14.800 15.500 13.400V10.800C15.500 9.900 15.200 9.400 14.600 9.100"/><path d="M6.400 12.600L7.300 10.100L13.900 3.400L16 5.500L9.300 12.100ZM12.600 4.700L14.700 6.800" stroke-linejoin="miter"/></svg>
<svg style="left:1839px;top:605px" width="20" height="22" viewBox="0 0 20 22" fill="none" stroke="#c9c5c0" stroke-width=".950" stroke-linecap="round" stroke-linejoin="round"><path d="M5 17.400C3.500 17.400 2.400 16.400 2.400 15V4.800C2.400 3.400 3.200 2.600 4.600 2.600H13.300L15.300 4.900"/><rect x="5.600" y="5.300" width="12" height="15" rx="3.200" fill="#fff"/><path d="M8.800 10H11.300M8.800 13H13.800M8.800 16H13.800" stroke-width="1.500" stroke-linecap="butt" opacity=".65"/></svg>
<svg style="left:1878px;top:609px" width="4" height="14" viewBox="0 0 4 14" fill="#c9c5c0"><circle cx="2" cy="2" r="1.100"/><circle cx="2" cy="7" r="1.100"/><circle cx="2" cy="12" r="1.100"/></svg>
<div style="left:288px;top:633px;width:1609px;height:35px;background:#fce8e8"></div>
<div style="left:288px;top:633px;width:1609px;height:1px;background:#e8e8e8"></div>
<div style="left:296px;top:643px;width:16px;height:16px;background:#fff;border:1px solid #b8b8b8;border-radius:3px;opacity:.55"></div>
<div class="c m" style="left:320px;top:633px;width:50px;height:36px;letter-spacing:0">13</div>
<div class="c" style="left:381px;top:633px;width:118px;height:36px;"><span id="t38" style="letter-spacing:-0.24px">Chưa chuẩn hóa</span></div>
<div style="left:514px;top:643px;width:1px;height:25px;background:repeating-linear-gradient(180deg,#8a8a8a 0,#8a8a8a 1px,transparent 1px,transparent 2px)"></div>
<div style="left:514px;top:657px;width:11px;height:1px;background:repeating-linear-gradient(90deg,#8a8a8a 0,#8a8a8a 1px,transparent 1px,transparent 2px)"></div>
<div class="c" style="left:531px;top:633px;width:138px;height:36px;">SĐBT-2017</div>
<svg style="left:681px;top:646px" width="14" height="14" viewBox="0 0 14 14" fill="none" stroke="#f6ae2d" stroke-width="1.200" stroke-linecap="round"><circle cx="7" cy="7" r="6.200"/><path d="M7 6.500v3.500"/><circle cx="7" cy="4.200" r=".5" fill="#f6ae2d"/></svg>
<div class="c" style="left:703px;top:633px;width:166px;height:36px;">Sân đường bê tông khu nh...</div>
<div class="c" style="left:881px;top:633px;width:189px;height:36px;">Các vật kiến trúc khác</div>
<div class="c" style="left:1081px;top:633px;width:188px;height:36px;">Bộ môn Toán</div>
<div class="c r n" style="left:1270px;top:633px;width:110px;height:36px;">1,00</div>
<div class="c r n" style="left:1390px;top:633px;width:150px;height:36px;">1.824.810.000</div>
<div class="c r n" style="left:1550px;top:633px;width:190px;height:36px;">729.924.000</div>
<div class="circ" style="left:1803px;top:638px;width:26px;height:26px;"></div>
<div class="circ" style="left:1835px;top:638px;width:26px;height:26px;"></div>
<div class="circ" style="left:1867px;top:638px;width:26px;height:26px;"></div>
<svg style="left:1807px;top:642px" width="18" height="18" viewBox="0 0 18 18" fill="none" stroke="#c9c5c0" stroke-width="1.200" stroke-linecap="round" stroke-linejoin="round"><path d="M5.300 8.400C3.900 8.600 3.300 9.400 3.300 10.800V13.400C3.300 14.800 4.200 15.600 5.500 15.600H13.300C14.600 15.600 15.500 14.800 15.500 13.400V10.800C15.500 9.900 15.200 9.400 14.600 9.100"/><path d="M6.400 12.600L7.300 10.100L13.900 3.400L16 5.500L9.300 12.100ZM12.600 4.700L14.700 6.800" stroke-linejoin="miter"/></svg>
<svg style="left:1839px;top:640px" width="20" height="22" viewBox="0 0 20 22" fill="none" stroke="#c9c5c0" stroke-width=".950" stroke-linecap="round" stroke-linejoin="round"><path d="M5 17.400C3.500 17.400 2.400 16.400 2.400 15V4.800C2.400 3.400 3.200 2.600 4.600 2.600H13.300L15.300 4.900"/><rect x="5.600" y="5.300" width="12" height="15" rx="3.200" fill="#fff"/><path d="M8.800 10H11.300M8.800 13H13.800M8.800 16H13.800" stroke-width="1.500" stroke-linecap="butt" opacity=".65"/></svg>
<svg style="left:1878px;top:644px" width="4" height="14" viewBox="0 0 4 14" fill="#c9c5c0"><circle cx="2" cy="2" r="1.100"/><circle cx="2" cy="7" r="1.100"/><circle cx="2" cy="12" r="1.100"/></svg>
<div style="left:288px;top:668px;width:1609px;height:31px;background:#fff"></div>
<div style="left:288px;top:668px;width:1609px;height:1px;background:#e8e8e8"></div>
<div style="left:296px;top:678px;width:16px;height:16px;background:#fff;border:1px solid #b8b8b8;border-radius:3px"></div>
<div class="c m" style="left:320px;top:668px;width:50px;height:36px;letter-spacing:0">14</div>
<div class="c" style="left:381px;top:668px;width:118px;height:36px;"><span id="t39" style="letter-spacing:-0.16px">Đã chuẩn hóa</span></div>
<div style="left:514px;top:678px;width:1px;height:21px;background:repeating-linear-gradient(180deg,#8a8a8a 0,#8a8a8a 1px,transparent 1px,transparent 2px)"></div>
<div style="left:514px;top:692px;width:11px;height:1px;background:repeating-linear-gradient(90deg,#8a8a8a 0,#8a8a8a 1px,transparent 1px,transparent 2px)"></div>
<div class="c" style="left:531px;top:668px;width:138px;height:36px;">MVT2614</div>
<div class="c" style="left:681px;top:668px;width:188px;height:36px;">Tài sản khai báo</div>
<div class="c" style="left:881px;top:668px;width:189px;height:36px;">Máy vi tính để bàn</div>
<div class="c" style="left:1081px;top:668px;width:188px;height:36px;">Bộ môn Toán</div>
<div class="c r n" style="left:1270px;top:668px;width:110px;height:36px;">1,00</div>
<div class="c r n" style="left:1390px;top:668px;width:150px;height:36px;">100.000.000</div>
<div class="c r n" style="left:1550px;top:668px;width:190px;height:36px;">0</div>
<svg style="left:1807px;top:677px" width="18" height="18" viewBox="0 0 18 18" fill="none" stroke="#3556ee" stroke-width="1.200" stroke-linecap="round" stroke-linejoin="round"><path d="M5.300 8.400C3.900 8.600 3.300 9.400 3.300 10.800V13.400C3.300 14.800 4.200 15.600 5.500 15.600H13.300C14.600 15.600 15.500 14.800 15.500 13.400V10.800C15.500 9.900 15.200 9.400 14.600 9.100"/><path d="M6.400 12.600L7.300 10.100L13.900 3.400L16 5.500L9.300 12.100ZM12.600 4.700L14.700 6.800" stroke-linejoin="miter"/></svg>
<svg style="left:1839px;top:675px" width="20" height="22" viewBox="0 0 20 22" fill="none" stroke="#4a4a4a" stroke-width=".950" stroke-linecap="round" stroke-linejoin="round"><path d="M5 17.400C3.500 17.400 2.400 16.400 2.400 15V4.800C2.400 3.400 3.200 2.600 4.600 2.600H13.300L15.300 4.900"/><rect x="5.600" y="5.300" width="12" height="15" rx="3.200" fill="#fff"/><path d="M8.800 10H11.300M8.800 13H13.800M8.800 16H13.800" stroke-width="1.500" stroke-linecap="butt" opacity=".65"/></svg>
<svg style="left:1878px;top:679px" width="4" height="14" viewBox="0 0 4 14" fill="#4a4a4a"><circle cx="2" cy="2" r="1.100"/><circle cx="2" cy="7" r="1.100"/><circle cx="2" cy="12" r="1.100"/></svg>
<div style="left:288px;top:213px;width:2px;height:35px;background:#2d55ec"></div>
<div style="left:288px;top:699px;width:1616px;height:35px;background:#f3f3f3"></div>
<div style="left:288px;top:699px;width:1609px;height:1px;background:#e8e8e8"></div>
<div class="c r b n" style="left:1270px;top:699px;width:110px;height:35px;">27,00</div>
<div class="c r b n" style="left:1390px;top:699px;width:150px;height:35px;">29.643.046.419</div>
<div class="c r b n" style="left:1550px;top:699px;width:190px;height:35px;">1.937.303.219</div>
<div style="left:288px;top:734px;width:1616px;height:7px;background:#f3f3f3"></div>
<div style="left:288px;top:734px;width:524px;height:7px;background:#d0d0d0"></div>
<div style="left:1897px;top:213px;width:7px;height:521px;background:#efefef"></div>
<div style="left:1897px;top:213px;width:7px;height:337px;background:#d3d3d3"></div>
<div class="vl" style="left:320px;top:142px;width:1px;height:592px;opacity:.9"></div>
<div class="vl" style="left:370px;top:142px;width:1px;height:592px;opacity:.9"></div>
<div class="vl" style="left:500px;top:142px;width:1px;height:592px;opacity:.9"></div>
<div class="vl" style="left:670px;top:142px;width:1px;height:592px;opacity:.9"></div>
<div class="vl" style="left:870px;top:142px;width:1px;height:592px;opacity:.9"></div>
<div class="vl" style="left:1070px;top:142px;width:1px;height:592px;opacity:.9"></div>
<div class="vl" style="left:1270px;top:142px;width:1px;height:592px;opacity:.9"></div>
<div class="vl" style="left:1390px;top:142px;width:1px;height:592px;opacity:.9"></div>
<div class="vl" style="left:1550px;top:142px;width:1px;height:592px;opacity:.9"></div>
<div class="vl" style="left:1750px;top:142px;width:1px;height:592px;opacity:.9"></div>
<div class="vl" style="left:1794px;top:142px;width:1px;height:592px;opacity:.9"></div>
<div class="hl" style="left:288px;top:177px;width:1616px;height:1px;"></div>
<div style="left:296px;top:152px;width:16px;height:16px;background:#fff;border:1px solid #b8b8b8;border-radius:3px"></div>
<div class="c m b" style="left:320px;top:142px;width:50px;height:35px;">STT</div>
<div class="c b" style="left:381px;top:142px;width:180px;height:35px;"><span id="t40" style="letter-spacing:-0.45px">Tình trạng dữ liệu</span></div>
<div class="c b" style="left:511px;top:142px;width:180px;height:35px;"><span id="t41" style="letter-spacing:-0.24px">Mã tài sản</span></div>
<div class="c b" style="left:681px;top:142px;width:180px;height:35px;"><span id="t42" style="letter-spacing:-0.31px">Tên tài sản</span></div>
<div class="c b" style="left:881px;top:142px;width:180px;height:35px;"><span id="t43" style="letter-spacing:-0.38px">Loại tài sản</span></div>
<div class="c b" style="left:1081px;top:142px;width:180px;height:35px;"><span id="t44" style="letter-spacing:-0.64px">Bộ phận sử dụng</span></div>
<div class="c r b" style="left:1270px;top:142px;width:110px;height:35px;"><span id="t45" style="letter-spacing:-0.8px">Số lượng</span></div>
<div class="c r b" style="left:1390px;top:142px;width:150px;height:35px;">Nguyên giá</div>
<div class="c r b" style="left:1550px;top:142px;width:190px;height:35px;"><span id="t46" style="letter-spacing:-0.13px">HM/KH lũy kế</span></div>
<div class="c m b" style="left:1794px;top:142px;width:110px;height:35px;"><span id="t47" style="letter-spacing:-0.74px">Chức năng</span></div>
<div class="inp" style="left:374px;top:181px;width:123px;height:28px;"></div>
<svg style="left:482px;top:192px" width="8" height="5" viewBox="0 0 8 5"><path d="M0 .3h8L4 4.800z" fill="#111"/></svg>
<div class="inp" style="left:504px;top:181px;width:163px;height:28px;"></div>
<div style="left:642px;top:181px;width:1px;height:28px;background:#e0e0e0"></div>
<svg style="left:646px;top:187px" width="16" height="16" viewBox="0 0 16 16" fill="none" stroke="#5a5a5a" stroke-width="1.100" stroke-linejoin="round"><path d="M2 2.500h12l-4.500 5.500v5.500l-3-1.500v-4z"/></svg>
<div class="inp" style="left:674px;top:181px;width:193px;height:28px;"></div>
<div style="left:842px;top:181px;width:1px;height:28px;background:#e0e0e0"></div>
<svg style="left:846px;top:187px" width="16" height="16" viewBox="0 0 16 16" fill="none" stroke="#5a5a5a" stroke-width="1.100" stroke-linejoin="round"><path d="M2 2.500h12l-4.500 5.500v5.500l-3-1.500v-4z"/></svg>
<div class="inp" style="left:874px;top:181px;width:193px;height:28px;"></div>
<svg style="left:1026px;top:192px" width="8" height="5" viewBox="0 0 8 5"><path d="M0 .3h8L4 4.800z" fill="#111"/></svg>
<svg style="left:1046px;top:187px" width="16" height="16" viewBox="0 0 16 16" fill="none" stroke="#5a5a5a" stroke-width="1.100" stroke-linejoin="round"><path d="M2 2.500h12l-4.500 5.500v5.500l-3-1.500v-4z"/></svg>
<div class="inp" style="left:1074px;top:181px;width:193px;height:28px;"></div>
<svg style="left:1226px;top:192px" width="8" height="5" viewBox="0 0 8 5"><path d="M0 .3h8L4 4.800z" fill="#111"/></svg>
<svg style="left:1246px;top:187px" width="16" height="16" viewBox="0 0 16 16" fill="none" stroke="#5a5a5a" stroke-width="1.100" stroke-linejoin="round"><path d="M2 2.500h12l-4.500 5.500v5.500l-3-1.500v-4z"/></svg>
<div class="inp" style="left:1274px;top:181px;width:113px;height:28px;"></div>
<div style="left:1304px;top:181px;width:1px;height:28px;background:#e0e0e0"></div>
<div class="c m" style="left:1274px;top:181px;width:30px;height:27px;color:#555;letter-spacing:0;font-size:12px">=</div>
<div class="inp" style="left:1394px;top:181px;width:153px;height:28px;"></div>
<div style="left:1424px;top:181px;width:1px;height:28px;background:#e0e0e0"></div>
<div class="c m" style="left:1394px;top:181px;width:30px;height:27px;color:#555;letter-spacing:0;font-size:12px">=</div>
<div class="inp" style="left:1554px;top:181px;width:193px;height:28px;"></div>
<div style="left:1584px;top:181px;width:1px;height:28px;background:#e0e0e0"></div>
<div class="c m" style="left:1554px;top:181px;width:30px;height:27px;color:#555;letter-spacing:0;font-size:12px">=</div>
<div class="inp" style="left:1754px;top:181px;width:40px;height:28px;border-right:0"></div>
<div style="left:1784px;top:181px;width:1px;height:28px;background:#e0e0e0"></div>
<div class="c m" style="left:1754px;top:181px;width:30px;height:27px;color:#555;letter-spacing:0;font-size:12px">=</div>
<div style="left:1795px;top:142px;width:109px;height:71px;background:#f5f5f5"></div>
<div class="hl" style="left:1795px;top:177px;width:109px;height:1px;"></div>
<div class="c m b" style="left:1794px;top:142px;width:110px;height:35px;"><span id="t48" style="letter-spacing:-0.74px">Chức năng</span></div>
<div style="left:288px;top:741px;width:1616px;height:37px;background:#fff"></div>
<div class="c" style="left:298px;top:741px;width:200px;height:38px;letter-spacing:0">Tổng số:&nbsp;<b style="letter-spacing:0;color:#1f1f1f">23</b>&nbsp;bản ghi</div>
<div class="c" style="left:1618px;top:741px;width:100px;height:38px;"><span id="t49" style="letter-spacing:0.1px">Số dòng/trang</span></div>
<div class="c" style="left:1712px;top:741px;width:30px;height:38px;letter-spacing:0">20</div>
<svg style="left:1740px;top:757px" width="10" height="7" viewBox="0 0 10 7" fill="none" stroke="#111" stroke-width="1.800" stroke-linecap="round" stroke-linejoin="round"><path d="M1.200 1.200L5 5.200L8.800 1.200"/></svg>
<div class="c" style="left:1782px;top:742px;width:10px;height:38px;color:#999;font-size:12px">&lt;</div>
<div class="c" style="left:1800px;top:741px;width:40px;height:38px;"><span id="t50" style="letter-spacing:-0.3px">Trang</span></div>
<div class="c b" style="left:1847px;top:741px;width:12px;height:38px;letter-spacing:0">1</div>
<div class="c" style="left:1865px;top:741px;width:12px;height:38px;letter-spacing:0">2</div>
<div class="c" style="left:1887px;top:742px;width:10px;height:38px;font-size:12px;color:#333">&gt;</div>
<div style="left:288px;top:778px;width:1616px;height:1px;background:#ababab"></div>
<div style="left:288px;top:781px;width:1616px;height:1px;background:#ababab"></div>
<div class="c" style="left:304px;top:781px;width:110px;height:30px;color:#2d55ec"><span id="t51" style="letter-spacing:-0.02px">Lịch sử biến động</span></div>
<div style="left:304px;top:812px;width:104px;height:2px;background:#2d55ec"></div>
<div class="c" style="left:439px;top:781px;width:110px;height:30px;"><span id="t52" style="letter-spacing:-0.0px">Thông tin kê khai</span></div>
<div class="c" style="left:570px;top:781px;width:90px;height:30px;"><span id="t53" style="letter-spacing:-0.08px">Tệp đính kèm</span></div>
<div style="left:1878px;top:790px;width:16px;height:16px;border-radius:50%;background:#e4e4e8"></div>
<svg style="left:1881.5px;top:796px" width="9" height="6" viewBox="0 0 9 6" fill="none" stroke="#2d55ec" stroke-width="1.500" stroke-linecap="round" stroke-linejoin="round"><path d="M1 1L4.500 4.500L8 1"/></svg>
<div style="left:288px;top:815px;width:1616px;height:35px;background:#f5f5f5"></div>
<div class="hl" style="left:288px;top:850px;width:1616px;height:1px;"></div>
<div class="hl" style="left:288px;top:885px;width:1616px;height:1px;"></div>
<div class="vl" style="left:347px;top:815px;width:1px;height:71px;"></div>
<div class="vl" style="left:467px;top:815px;width:1px;height:71px;"></div>
<div class="vl" style="left:617px;top:815px;width:1px;height:71px;"></div>
<div class="vl" style="left:767px;top:815px;width:1px;height:71px;"></div>
<div class="vl" style="left:1061px;top:815px;width:1px;height:71px;"></div>
<div class="vl" style="left:1211px;top:815px;width:1px;height:71px;"></div>
<div class="vl" style="left:1361px;top:815px;width:1px;height:71px;"></div>
<div class="vl" style="left:1511px;top:815px;width:1px;height:71px;"></div>
<div class="vl" style="left:1661px;top:815px;width:1px;height:71px;"></div>
<div class="vl" style="left:1811px;top:815px;width:1px;height:71px;"></div>
<div class="vl" style="left:1813px;top:815px;width:1px;height:71px;"></div>
<div class="c m b" style="left:288px;top:815px;width:59px;height:35px;">STT</div>
<div class="c b" style="left:358px;top:815px;width:100px;height:35px;"><span id="t54" style="letter-spacing:-0.69px">Số chứng từ</span></div>
<div class="c m b" style="left:467px;top:815px;width:150px;height:35px;"><span id="t55" style="letter-spacing:-0.56px">Ngày chứng từ</span></div>
<div class="c m b" style="left:617px;top:815px;width:150px;height:35px;"><span id="t56" style="letter-spacing:-0.39px">Ngày biến động</span></div>
<div class="c b" style="left:778px;top:815px;width:150px;height:35px;"><span id="t57" style="letter-spacing:-0.48px">Nội dung</span></div>
<div class="c r b" style="left:1061px;top:815px;width:140px;height:35px;"><span id="t58" style="letter-spacing:-0.46px">Nguyên giá</span></div>
<div class="c r b" style="left:1211px;top:815px;width:140px;height:35px;"><span id="t59" style="letter-spacing:-0.42px">Số tiền thực hiện</span></div>
<div class="c r b" style="left:1361px;top:815px;width:140px;height:35px;"><span id="t60" style="letter-spacing:-0.21px">Giá trị HM/KH</span></div>
<div class="c r b" style="left:1511px;top:815px;width:140px;height:35px;"><span id="t61" style="letter-spacing:-0.13px">HM/KH lũy kế</span></div>
<div class="c r b" style="left:1661px;top:815px;width:140px;height:35px;"><span id="t62" style="letter-spacing:-0.36px">Giá trị còn lại</span></div>
<div class="c m b" style="left:1813px;top:815px;width:91px;height:35px;"><span id="t63" style="letter-spacing:-0.74px">Chức năng</span></div>
<div class="c m" style="left:288px;top:851px;width:59px;height:34px;letter-spacing:0">1</div>
<div class="c m" style="left:467px;top:851px;width:150px;height:34px;"><span id="t64" style="letter-spacing:0.36px">01/01/2024</span></div>
<div class="c m" style="left:617px;top:851px;width:150px;height:34px;"><span id="t65" style="letter-spacing:0.36px">01/01/2024</span></div>
<div class="c" style="left:778px;top:851px;width:282px;height:34px;"><span id="t66" style="letter-spacing:-0.17px">Chuyển loại tài sản từ Tài sản dưới 500 triệu sa...</span></div>
<div class="c r n" style="left:1061px;top:851px;width:140px;height:34px;">600.000.000</div>
<div class="c r n" style="left:1211px;top:851px;width:140px;height:34px;">0</div>
<div class="c r n" style="left:1361px;top:851px;width:140px;height:34px;">0</div>
<div class="c r n" style="left:1511px;top:851px;width:140px;height:34px;">0</div>
<div class="c r n" style="left:1661px;top:851px;width:140px;height:34px;">600.000.000</div>
<svg style="left:1849px;top:860px" width="16" height="17" viewBox="0 0 16 17" fill="none" stroke="#e1512f" stroke-width="1.200" stroke-linecap="round" stroke-linejoin="round"><path d="M1.100 5H15M4.600 5C4.600 2.500 5.600 1.400 8 1.400C10.400 1.400 11.400 2.500 11.400 5"/><path d="M2.600 5V12.600C2.600 14.500 3.600 15.500 5.500 15.500H10.600C12.500 15.500 13.500 14.500 13.500 12.600V5"/><path d="M6.300 7.600V12.400M9.800 7.600V12.400"/></svg>
<div style="left:1904px;top:345px;width:15px;height:90px;background:#2d55ec;border-radius:6px 0 0 6px;box-shadow:0 2px 4px rgba(0,0,0,.2)"></div>
<svg style="left:1909px;top:386px" width="6" height="9" viewBox="0 0 6 9" fill="none" stroke="#fff" stroke-width="1.300" stroke-linecap="round" stroke-linejoin="round"><path d="M4.500 1L1.500 4.500L4.500 8"/></svg>
<div style="left:1495px;top:134px;width:157px;height:129px;background:#fff;border-radius:4px;box-shadow:0 3px 10px rgba(0,0,0,.22)"></div>
<svg style="left:1503px;top:138px" width="24" height="24" viewBox="0 0 24 24"><circle cx="12" cy="12" r="11.900" fill="#0a40d8"/><circle cx="6.200" cy="7.300" r="2.700" fill="#fff"/><circle cx="17.900" cy="7.300" r="2.700" fill="#fff"/><path d="M4.800 8.300L7 6.300M19.300 8.300L17.100 6.300" stroke="#bcd8ff" stroke-width="1" stroke-linecap="round"/><ellipse cx="12" cy="12.500" rx="9" ry="6.900" fill="#fff"/><ellipse cx="12.100" cy="13.600" rx="6.100" ry="3.900" fill="#07076f"/><circle cx="9" cy="13.200" r="1.500" fill="#3a3f5c" stroke="#5b8df5" stroke-width=".9"/><circle cx="15.100" cy="13.200" r="1.500" fill="#3a3f5c" stroke="#5b8df5" stroke-width=".9"/><path d="M11.300 15.700h1.500l-.75 1.600z" fill="#b9badf"/></svg>
<div class="c" style="left:1535px;top:134px;width:110px;height:30px;color:#333"><span id="t67" style="letter-spacing:-0.08px">Thêm bằng AI</span></div>
<svg style="left:1508px;top:175px" width="14" height="14" viewBox="0 0 14 14" stroke="#626978" stroke-width="1.200" stroke-linecap="round"><path d="M7 1v12M1 7h12"/></svg>
<div class="c" style="left:1535px;top:166px;width:110px;height:30px;color:#333"><span id="t68" style="letter-spacing:-0.01px">Thêm tài sản</span></div>
<svg style="left:1507px;top:207px" width="16" height="14" viewBox="0 0 16 14" stroke="#626978" stroke-width="1.200" stroke-linecap="round" fill="none"><path d="M1 1.500h13M1 6h13M1 10.500h8M12.500 8.500v4M10.500 10.500h4"/></svg>
<div class="c" style="left:1535px;top:198px;width:110px;height:30px;color:#333"><span id="t69" style="letter-spacing:0.01px">Thêm lô tài sản</span></div>
<div style="left:1495px;top:230px;width:157px;height:1px;background:#e0e0e0"></div>
<svg style="left:1508px;top:239px" width="15" height="15" viewBox="0 0 16 16" stroke="#4a4f5c" stroke-width="1.200" stroke-linecap="round" stroke-linejoin="round" fill="none"><path d="M8 1.500v8.500M4.500 7L8 10.500L11.500 7M1.500 10.500v2.500c0 1 .5 1.500 1.500 1.500h10c1 0 1.500-.5 1.500-1.500v-2.500"/></svg>
<div class="c" style="left:1535px;top:231px;width:110px;height:30px;color:#333"><span id="t70" style="letter-spacing:-0.04px">Nhập khẩu</span></div>
<div class="red" style="left:9px;top:155px;width:208px;height:47px;"></div>
<div class="red" style="left:1613px;top:99px;width:41px;height:35px;"></div>
<div class="red" style="left:1494px;top:167px;width:154px;height:35px;"></div>
<div class="num" style="left:198px;top:190px;width:40px;height:40px;">1</div>
<div style="left:209px;top:216px;width:7.6px;height:6px;background:#fc4242"></div>
<div style="left:221.4px;top:216px;width:6px;height:6px;background:#fc4242"></div>
<div class="num" style="left:1632px;top:64px;width:40px;height:40px;">2</div>
<div class="num" style="left:1632px;top:182px;width:40px;height:40px;">3</div>
</body></html>
